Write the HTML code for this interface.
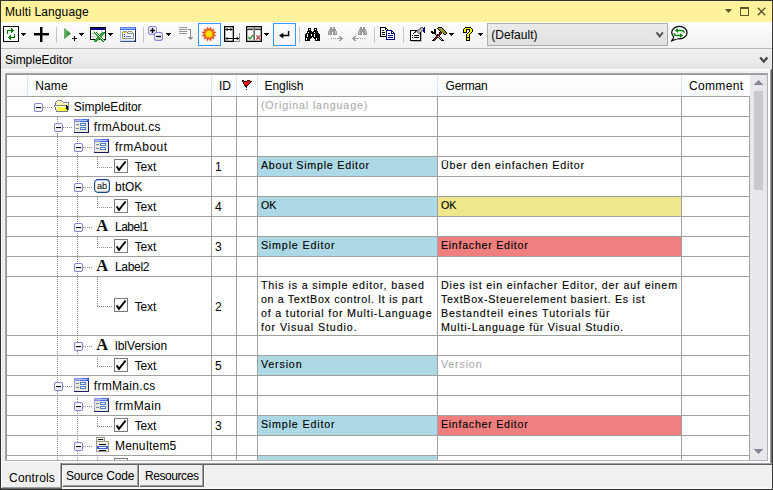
<!DOCTYPE html>
<html><head><meta charset="utf-8"><title>Multi Language</title>
<style>
html,body{margin:0;padding:0;}
body{width:773px;height:490px;position:relative;overflow:hidden;background:#f0f0f0;font-family:"Liberation Sans",sans-serif;}
body div,body span,body svg{position:absolute;display:block;}
span{white-space:nowrap;}
</style></head><body>
<div style="left:0px;top:0px;width:773px;height:490px;background:#f0f0f0;"></div>
<div style="left:0px;top:1px;width:773px;height:21px;background:#fff29d;"></div>
<span style="left:5.0px;top:5.84px;font-size:12px;line-height:12px;color:#000;letter-spacing:0.124px;">Multi Language</span>
<svg style="left:725px;top:9px" width="7" height="4" viewBox="0 0 7 4" ><path d="M0 0h7L3.5 4z" fill="#5f5427"/></svg>
<svg style="left:740px;top:7px" width="9" height="9" viewBox="0 0 9 9" ><path d="M0 0h9v9h-9zM1 2v6h7v-6z" fill="#5f5427" fill-rule="evenodd"/></svg>
<svg style="left:757px;top:7px" width="10" height="9" viewBox="0 0 10 9" ><path d="M0.800 0.800l7.400 7.400M8.200 0.800L0.800 8.200" stroke="#5f5427" stroke-width="1.500" fill="none"/></svg>
<div style="left:0px;top:22px;width:773px;height:26px;background:linear-gradient(#fdfdfd,#f1f1f1);"></div>
<div style="left:0px;top:48px;width:773px;height:1px;background:#b6b6b6;"></div>
<div style="left:0px;top:49px;width:773px;height:20px;background:linear-gradient(#f3f3f3,#e5e5e5);"></div>
<div style="left:0px;top:69px;width:773px;height:4px;background:#f0f0f0;"></div>
<span style="left:5.0px;top:53.84px;font-size:12px;line-height:12px;color:#000;letter-spacing:-0.019px;">SimpleEditor</span>
<svg style="left:759px;top:56px" width="10" height="9" viewBox="0 0 10 9" ><path d="M1.200 1.600l3.600 4L8.400 1.600" stroke="#484848" stroke-width="2.300" fill="none"/></svg>
<svg style="left:3px;top:26px" width="16" height="16" viewBox="0 0 16 16" shape-rendering="crispEdges"><rect x="0" y="0" width="16" height="1" fill="#000"/><rect x="0" y="1" width="1" height="1" fill="#000"/><rect x="1" y="1" width="14" height="1" fill="#fff"/><rect x="15" y="1" width="1" height="1" fill="#000"/><rect x="0" y="2" width="1" height="1" fill="#000"/><rect x="1" y="2" width="7" height="1" fill="#fff"/><rect x="8" y="2" width="1" height="1" fill="#008000"/><rect x="9" y="2" width="6" height="1" fill="#fff"/><rect x="15" y="2" width="1" height="1" fill="#000"/><rect x="0" y="3" width="1" height="1" fill="#000"/><rect x="1" y="3" width="7" height="1" fill="#fff"/><rect x="8" y="3" width="2" height="1" fill="#008000"/><rect x="10" y="3" width="5" height="1" fill="#fff"/><rect x="15" y="3" width="1" height="1" fill="#000"/><rect x="0" y="4" width="1" height="1" fill="#000"/><rect x="1" y="4" width="3" height="1" fill="#fff"/><rect x="4" y="4" width="7" height="1" fill="#008000"/><rect x="11" y="4" width="4" height="1" fill="#fff"/><rect x="15" y="4" width="1" height="1" fill="#000"/><rect x="0" y="5" width="1" height="1" fill="#000"/><rect x="1" y="5" width="3" height="1" fill="#fff"/><rect x="4" y="5" width="1" height="1" fill="#008000"/><rect x="5" y="5" width="3" height="1" fill="#fff"/><rect x="8" y="5" width="2" height="1" fill="#008000"/><rect x="10" y="5" width="5" height="1" fill="#fff"/><rect x="15" y="5" width="1" height="1" fill="#000"/><rect x="0" y="6" width="1" height="1" fill="#000"/><rect x="1" y="6" width="3" height="1" fill="#fff"/><rect x="4" y="6" width="1" height="1" fill="#008000"/><rect x="5" y="6" width="3" height="1" fill="#fff"/><rect x="8" y="6" width="1" height="1" fill="#008000"/><rect x="9" y="6" width="6" height="1" fill="#fff"/><rect x="15" y="6" width="1" height="1" fill="#000"/><rect x="0" y="7" width="1" height="1" fill="#000"/><rect x="1" y="7" width="3" height="1" fill="#fff"/><rect x="4" y="7" width="1" height="1" fill="#008000"/><rect x="5" y="7" width="10" height="1" fill="#fff"/><rect x="15" y="7" width="1" height="1" fill="#000"/><rect x="0" y="8" width="1" height="1" fill="#000"/><rect x="1" y="8" width="10" height="1" fill="#fff"/><rect x="11" y="8" width="1" height="1" fill="#008000"/><rect x="12" y="8" width="3" height="1" fill="#fff"/><rect x="15" y="8" width="1" height="1" fill="#000"/><rect x="0" y="9" width="1" height="1" fill="#000"/><rect x="1" y="9" width="6" height="1" fill="#fff"/><rect x="7" y="9" width="1" height="1" fill="#008000"/><rect x="8" y="9" width="3" height="1" fill="#fff"/><rect x="11" y="9" width="1" height="1" fill="#008000"/><rect x="12" y="9" width="3" height="1" fill="#fff"/><rect x="15" y="9" width="1" height="1" fill="#000"/><rect x="0" y="10" width="1" height="1" fill="#000"/><rect x="1" y="10" width="5" height="1" fill="#fff"/><rect x="6" y="10" width="2" height="1" fill="#008000"/><rect x="8" y="10" width="3" height="1" fill="#fff"/><rect x="11" y="10" width="1" height="1" fill="#008000"/><rect x="12" y="10" width="3" height="1" fill="#fff"/><rect x="15" y="10" width="1" height="1" fill="#000"/><rect x="0" y="11" width="1" height="1" fill="#000"/><rect x="1" y="11" width="4" height="1" fill="#fff"/><rect x="5" y="11" width="7" height="1" fill="#008000"/><rect x="12" y="11" width="3" height="1" fill="#fff"/><rect x="15" y="11" width="1" height="1" fill="#000"/><rect x="0" y="12" width="1" height="1" fill="#000"/><rect x="1" y="12" width="5" height="1" fill="#fff"/><rect x="6" y="12" width="2" height="1" fill="#008000"/><rect x="8" y="12" width="7" height="1" fill="#fff"/><rect x="15" y="12" width="1" height="1" fill="#000"/><rect x="0" y="13" width="1" height="1" fill="#000"/><rect x="1" y="13" width="6" height="1" fill="#fff"/><rect x="7" y="13" width="1" height="1" fill="#008000"/><rect x="8" y="13" width="7" height="1" fill="#fff"/><rect x="15" y="13" width="1" height="1" fill="#000"/><rect x="0" y="14" width="1" height="1" fill="#000"/><rect x="1" y="14" width="14" height="1" fill="#fff"/><rect x="15" y="14" width="1" height="1" fill="#000"/><rect x="0" y="15" width="16" height="1" fill="#000"/></svg>
<svg style="left:21px;top:33px" width="5" height="3" viewBox="0 0 5 3" shape-rendering="crispEdges"><rect x="0" y="0" width="5" height="1" fill="#000"/><rect x="1" y="1" width="3" height="1" fill="#000"/><rect x="2" y="2" width="1" height="1" fill="#000"/></svg>
<svg style="left:34px;top:27px" width="15" height="15" viewBox="0 0 15 15" ><path d="M0 6h15v2h-15zM6 0h2v15h-2z" fill="#000"/><path d="M0 8h6v0.800h-6zM8 8h7v0.800h-7zM8 0h0.800v6h-0.800zM8 8.800h0.800v6.200h-0.800z" fill="#666"/></svg>
<div style="left:56px;top:27px;width:1px;height:16px;background:#c4c4c4;"></div>
<svg style="left:64px;top:28px" width="8" height="11" viewBox="0 0 8 11" ><defs><linearGradient id="pg" x1="0" y1="0.200" x2="1" y2="0.600"><stop offset="0" stop-color="#7cc67c"/><stop offset="0.600" stop-color="#3f9a3f"/><stop offset="1" stop-color="#1c6c1c"/></linearGradient></defs><path d="M0.400 0.200v10.600l6-5.300z" fill="url(#pg)" stroke="#2a7a2a" stroke-width="0.500"/></svg>
<svg style="left:72px;top:36px" width="5" height="5" viewBox="0 0 5 5" shape-rendering="crispEdges"><rect x="2" y="0" width="1" height="1" fill="#000"/><rect x="2" y="1" width="1" height="1" fill="#000"/><rect x="0" y="2" width="5" height="1" fill="#000"/><rect x="2" y="3" width="1" height="1" fill="#000"/><rect x="2" y="4" width="1" height="1" fill="#000"/></svg>
<svg style="left:79px;top:33px" width="5" height="3" viewBox="0 0 5 3" shape-rendering="crispEdges"><rect x="0" y="0" width="5" height="1" fill="#000"/><rect x="1" y="1" width="3" height="1" fill="#000"/><rect x="2" y="2" width="1" height="1" fill="#000"/></svg>
<svg style="left:90px;top:27px" width="16" height="15" viewBox="0 0 16 15" shape-rendering="crispEdges"><rect x="0" y="0" width="16" height="1" fill="#000"/><rect x="0" y="1" width="1" height="1" fill="#000"/><rect x="1" y="1" width="14" height="1" fill="#0a0a8a"/><rect x="15" y="1" width="1" height="1" fill="#000"/><rect x="0" y="2" width="1" height="1" fill="#000"/><rect x="1" y="2" width="14" height="1" fill="#0a0a8a"/><rect x="15" y="2" width="1" height="1" fill="#000"/><rect x="0" y="3" width="1" height="1" fill="#000"/><rect x="1" y="3" width="2" height="1" fill="#fff"/><rect x="3" y="3" width="1" height="1" fill="#cfcfcf"/><rect x="4" y="3" width="3" height="1" fill="#fff"/><rect x="7" y="3" width="1" height="1" fill="#cfcfcf"/><rect x="8" y="3" width="3" height="1" fill="#fff"/><rect x="11" y="3" width="1" height="1" fill="#cfcfcf"/><rect x="12" y="3" width="3" height="1" fill="#fff"/><rect x="15" y="3" width="1" height="1" fill="#000"/><rect x="0" y="4" width="1" height="1" fill="#000"/><rect x="1" y="4" width="2" height="1" fill="#fff"/><rect x="3" y="4" width="1" height="1" fill="#cfcfcf"/><rect x="4" y="4" width="3" height="1" fill="#fff"/><rect x="7" y="4" width="1" height="1" fill="#cfcfcf"/><rect x="8" y="4" width="3" height="1" fill="#fff"/><rect x="11" y="4" width="1" height="1" fill="#cfcfcf"/><rect x="12" y="4" width="3" height="1" fill="#fff"/><rect x="15" y="4" width="1" height="1" fill="#000"/><rect x="0" y="5" width="1" height="1" fill="#000"/><rect x="1" y="5" width="2" height="1" fill="#fff"/><rect x="3" y="5" width="1" height="1" fill="#cfcfcf"/><rect x="4" y="5" width="1" height="1" fill="#078a07"/><rect x="5" y="5" width="1" height="1" fill="#fff"/><rect x="6" y="5" width="1" height="1" fill="#078a07"/><rect x="7" y="5" width="1" height="1" fill="#cfcfcf"/><rect x="8" y="5" width="3" height="1" fill="#fff"/><rect x="11" y="5" width="1" height="1" fill="#cfcfcf"/><rect x="12" y="5" width="1" height="1" fill="#078a07"/><rect x="13" y="5" width="1" height="1" fill="#5fb25f"/><rect x="14" y="5" width="1" height="1" fill="#078a07"/><rect x="15" y="5" width="1" height="1" fill="#000"/><rect x="0" y="6" width="1" height="1" fill="#000"/><rect x="1" y="6" width="3" height="1" fill="#cfcfcf"/><rect x="4" y="6" width="1" height="1" fill="#5fb25f"/><rect x="5" y="6" width="1" height="1" fill="#078a07"/><rect x="6" y="6" width="1" height="1" fill="#fff"/><rect x="7" y="6" width="1" height="1" fill="#078a07"/><rect x="8" y="6" width="3" height="1" fill="#cfcfcf"/><rect x="11" y="6" width="1" height="1" fill="#078a07"/><rect x="12" y="6" width="1" height="1" fill="#5fb25f"/><rect x="13" y="6" width="1" height="1" fill="#078a07"/><rect x="14" y="6" width="1" height="1" fill="#5fb25f"/><rect x="15" y="6" width="1" height="1" fill="#000"/><rect x="0" y="7" width="1" height="1" fill="#000"/><rect x="1" y="7" width="2" height="1" fill="#fff"/><rect x="3" y="7" width="1" height="1" fill="#cfcfcf"/><rect x="4" y="7" width="1" height="1" fill="#fff"/><rect x="5" y="7" width="1" height="1" fill="#5fb25f"/><rect x="6" y="7" width="1" height="1" fill="#078a07"/><rect x="7" y="7" width="1" height="1" fill="#fff"/><rect x="8" y="7" width="1" height="1" fill="#078a07"/><rect x="9" y="7" width="1" height="1" fill="#fff"/><rect x="10" y="7" width="1" height="1" fill="#078a07"/><rect x="11" y="7" width="1" height="1" fill="#5fb25f"/><rect x="12" y="7" width="1" height="1" fill="#078a07"/><rect x="13" y="7" width="1" height="1" fill="#5fb25f"/><rect x="14" y="7" width="1" height="1" fill="#fff"/><rect x="15" y="7" width="1" height="1" fill="#000"/><rect x="0" y="8" width="1" height="1" fill="#000"/><rect x="1" y="8" width="2" height="1" fill="#fff"/><rect x="3" y="8" width="1" height="1" fill="#cfcfcf"/><rect x="4" y="8" width="2" height="1" fill="#fff"/><rect x="6" y="8" width="1" height="1" fill="#5fb25f"/><rect x="7" y="8" width="1" height="1" fill="#078a07"/><rect x="8" y="8" width="1" height="1" fill="#fff"/><rect x="9" y="8" width="1" height="1" fill="#078a07"/><rect x="10" y="8" width="1" height="1" fill="#5fb25f"/><rect x="11" y="8" width="1" height="1" fill="#078a07"/><rect x="12" y="8" width="1" height="1" fill="#5fb25f"/><rect x="13" y="8" width="2" height="1" fill="#fff"/><rect x="15" y="8" width="1" height="1" fill="#000"/><rect x="0" y="9" width="1" height="1" fill="#000"/><rect x="1" y="9" width="6" height="1" fill="#cfcfcf"/><rect x="7" y="9" width="1" height="1" fill="#5fb25f"/><rect x="8" y="9" width="1" height="1" fill="#078a07"/><rect x="9" y="9" width="1" height="1" fill="#fff"/><rect x="10" y="9" width="1" height="1" fill="#078a07"/><rect x="11" y="9" width="1" height="1" fill="#5fb25f"/><rect x="12" y="9" width="3" height="1" fill="#cfcfcf"/><rect x="15" y="9" width="1" height="1" fill="#000"/><rect x="0" y="10" width="1" height="1" fill="#000"/><rect x="1" y="10" width="2" height="1" fill="#fff"/><rect x="3" y="10" width="1" height="1" fill="#cfcfcf"/><rect x="4" y="10" width="3" height="1" fill="#fff"/><rect x="7" y="10" width="1" height="1" fill="#078a07"/><rect x="8" y="10" width="1" height="1" fill="#5fb25f"/><rect x="9" y="10" width="1" height="1" fill="#078a07"/><rect x="10" y="10" width="1" height="1" fill="#fff"/><rect x="11" y="10" width="1" height="1" fill="#078a07"/><rect x="12" y="10" width="3" height="1" fill="#fff"/><rect x="15" y="10" width="1" height="1" fill="#000"/><rect x="0" y="11" width="1" height="1" fill="#000"/><rect x="1" y="11" width="2" height="1" fill="#fff"/><rect x="3" y="11" width="1" height="1" fill="#cfcfcf"/><rect x="4" y="11" width="2" height="1" fill="#fff"/><rect x="6" y="11" width="1" height="1" fill="#078a07"/><rect x="7" y="11" width="1" height="1" fill="#5fb25f"/><rect x="8" y="11" width="1" height="1" fill="#078a07"/><rect x="9" y="11" width="1" height="1" fill="#5fb25f"/><rect x="10" y="11" width="1" height="1" fill="#078a07"/><rect x="11" y="11" width="1" height="1" fill="#fff"/><rect x="12" y="11" width="1" height="1" fill="#078a07"/><rect x="13" y="11" width="2" height="1" fill="#fff"/><rect x="15" y="11" width="1" height="1" fill="#000"/><rect x="0" y="12" width="5" height="1" fill="#000"/><rect x="5" y="12" width="1" height="1" fill="#078a07"/><rect x="6" y="12" width="1" height="1" fill="#5fb25f"/><rect x="7" y="12" width="1" height="1" fill="#078a07"/><rect x="8" y="12" width="1" height="1" fill="#5fb25f"/><rect x="9" y="12" width="1" height="1" fill="#000"/><rect x="10" y="12" width="1" height="1" fill="#5fb25f"/><rect x="11" y="12" width="1" height="1" fill="#078a07"/><rect x="12" y="12" width="1" height="1" fill="#fff"/><rect x="13" y="12" width="1" height="1" fill="#078a07"/><rect x="14" y="12" width="2" height="1" fill="#000"/><rect x="4" y="13" width="1" height="1" fill="#078a07"/><rect x="5" y="13" width="1" height="1" fill="#5fb25f"/><rect x="6" y="13" width="1" height="1" fill="#078a07"/><rect x="7" y="13" width="1" height="1" fill="#5fb25f"/><rect x="11" y="13" width="1" height="1" fill="#5fb25f"/><rect x="12" y="13" width="1" height="1" fill="#078a07"/><rect x="13" y="13" width="1" height="1" fill="#fff"/><rect x="14" y="13" width="1" height="1" fill="#078a07"/><rect x="4" y="14" width="1" height="1" fill="#5fb25f"/><rect x="5" y="14" width="1" height="1" fill="#078a07"/><rect x="6" y="14" width="1" height="1" fill="#5fb25f"/><rect x="12" y="14" width="1" height="1" fill="#5fb25f"/><rect x="13" y="14" width="1" height="1" fill="#078a07"/><rect x="14" y="14" width="1" height="1" fill="#fff"/></svg>
<svg style="left:108px;top:33px" width="5" height="3" viewBox="0 0 5 3" shape-rendering="crispEdges"><rect x="0" y="0" width="5" height="1" fill="#000"/><rect x="1" y="1" width="3" height="1" fill="#000"/><rect x="2" y="2" width="1" height="1" fill="#000"/></svg>
<svg style="left:120px;top:27px" width="16" height="15" viewBox="0 0 16 15" shape-rendering="crispEdges"><rect x="0" y="0" width="15" height="1" fill="#5a86e6"/><rect x="15" y="0" width="1" height="1" fill="#3a62d0"/><rect x="0" y="1" width="1" height="1" fill="#5a86e6"/><rect x="1" y="1" width="14" height="1" fill="#8fb4f5"/><rect x="15" y="1" width="1" height="1" fill="#3a62d0"/><rect x="0" y="2" width="15" height="1" fill="#4272e2"/><rect x="15" y="2" width="1" height="1" fill="#3a62d0"/><rect x="0" y="3" width="1" height="1" fill="#a9c2f2"/><rect x="1" y="3" width="14" height="1" fill="#fdfdfd"/><rect x="15" y="3" width="1" height="1" fill="#1f2c5e"/><rect x="0" y="4" width="1" height="1" fill="#a9c2f2"/><rect x="1" y="4" width="2" height="1" fill="#fdfdfd"/><rect x="3" y="4" width="4" height="1" fill="#8f9694"/><rect x="7" y="4" width="1" height="1" fill="#fdfdfd"/><rect x="8" y="4" width="4" height="1" fill="#8f9694"/><rect x="12" y="4" width="3" height="1" fill="#fdfdfd"/><rect x="15" y="4" width="1" height="1" fill="#1f2c5e"/><rect x="0" y="5" width="1" height="1" fill="#a9c2f2"/><rect x="1" y="5" width="1" height="1" fill="#fdfdfd"/><rect x="2" y="5" width="1" height="1" fill="#8f9694"/><rect x="3" y="5" width="4" height="1" fill="#f8c63c"/><rect x="7" y="5" width="1" height="1" fill="#8f9694"/><rect x="8" y="5" width="4" height="1" fill="#fdfdfd"/><rect x="12" y="5" width="1" height="1" fill="#8f9694"/><rect x="13" y="5" width="2" height="1" fill="#fdfdfd"/><rect x="15" y="5" width="1" height="1" fill="#1f2c5e"/><rect x="0" y="6" width="1" height="1" fill="#a9c2f2"/><rect x="1" y="6" width="1" height="1" fill="#fdfdfd"/><rect x="2" y="6" width="1" height="1" fill="#8f9694"/><rect x="3" y="6" width="4" height="1" fill="#fdfdfd"/><rect x="7" y="6" width="7" height="1" fill="#8f9694"/><rect x="14" y="6" width="1" height="1" fill="#fdfdfd"/><rect x="15" y="6" width="1" height="1" fill="#1f2c5e"/><rect x="0" y="7" width="1" height="1" fill="#a9c2f2"/><rect x="1" y="7" width="1" height="1" fill="#fdfdfd"/><rect x="2" y="7" width="1" height="1" fill="#8f9694"/><rect x="3" y="7" width="1" height="1" fill="#fdfdfd"/><rect x="4" y="7" width="1" height="1" fill="#2222ee"/><rect x="5" y="7" width="8" height="1" fill="#fdfdfd"/><rect x="13" y="7" width="1" height="1" fill="#8f9694"/><rect x="14" y="7" width="1" height="1" fill="#fdfdfd"/><rect x="15" y="7" width="1" height="1" fill="#1f2c5e"/><rect x="0" y="8" width="1" height="1" fill="#a9c2f2"/><rect x="1" y="8" width="1" height="1" fill="#fdfdfd"/><rect x="2" y="8" width="1" height="1" fill="#8f9694"/><rect x="3" y="8" width="10" height="1" fill="#fdfdfd"/><rect x="13" y="8" width="1" height="1" fill="#8f9694"/><rect x="14" y="8" width="1" height="1" fill="#fdfdfd"/><rect x="15" y="8" width="1" height="1" fill="#1f2c5e"/><rect x="0" y="9" width="1" height="1" fill="#a9c2f2"/><rect x="1" y="9" width="1" height="1" fill="#fdfdfd"/><rect x="2" y="9" width="1" height="1" fill="#8f9694"/><rect x="3" y="9" width="1" height="1" fill="#fdfdfd"/><rect x="4" y="9" width="1" height="1" fill="#2222ee"/><rect x="5" y="9" width="1" height="1" fill="#fdfdfd"/><rect x="6" y="9" width="4" height="1" fill="#5a8aee"/><rect x="10" y="9" width="1" height="1" fill="#2a4ab0"/><rect x="11" y="9" width="2" height="1" fill="#fdfdfd"/><rect x="13" y="9" width="1" height="1" fill="#8f9694"/><rect x="14" y="9" width="1" height="1" fill="#fdfdfd"/><rect x="15" y="9" width="1" height="1" fill="#1f2c5e"/><rect x="0" y="10" width="1" height="1" fill="#a9c2f2"/><rect x="1" y="10" width="1" height="1" fill="#fdfdfd"/><rect x="2" y="10" width="1" height="1" fill="#8f9694"/><rect x="3" y="10" width="10" height="1" fill="#fdfdfd"/><rect x="13" y="10" width="1" height="1" fill="#8f9694"/><rect x="14" y="10" width="1" height="1" fill="#fdfdfd"/><rect x="15" y="10" width="1" height="1" fill="#1f2c5e"/><rect x="0" y="11" width="1" height="1" fill="#a9c2f2"/><rect x="1" y="11" width="1" height="1" fill="#fdfdfd"/><rect x="2" y="11" width="12" height="1" fill="#8f9694"/><rect x="14" y="11" width="1" height="1" fill="#fdfdfd"/><rect x="15" y="11" width="1" height="1" fill="#1f2c5e"/><rect x="0" y="12" width="1" height="1" fill="#a9c2f2"/><rect x="1" y="12" width="14" height="1" fill="#e4ecfa"/><rect x="15" y="12" width="1" height="1" fill="#1f2c5e"/><rect x="0" y="13" width="1" height="1" fill="#a9c2f2"/><rect x="1" y="13" width="13" height="1" fill="#c9d8f4"/><rect x="14" y="13" width="1" height="1" fill="#6f8ac8"/><rect x="15" y="13" width="1" height="1" fill="#1f2c5e"/><rect x="0" y="14" width="1" height="1" fill="#6f8ac8"/><rect x="1" y="14" width="13" height="1" fill="#3c4f8c"/><rect x="14" y="14" width="2" height="1" fill="#1f2c5e"/></svg>
<div style="left:143px;top:27px;width:1px;height:16px;background:#c4c4c4;"></div>
<svg style="left:148px;top:26px" width="15" height="15" viewBox="0 0 15 15" ><defs><linearGradient id="bg1" x1="0" y1="0" x2="0" y2="1"><stop offset="0.600" stop-color="#fff"/><stop offset="1" stop-color="#e2e2e8"/></linearGradient></defs><rect x="0.600" y="0.600" width="7.800" height="7.800" rx="1.600" fill="url(#bg1)" stroke="#8a87d9" stroke-width="1.100"/><path d="M2 4.500h5M4.500 2v5" stroke="#000" stroke-width="1.400"/><rect x="6.600" y="6.600" width="7.800" height="7.800" rx="1.600" fill="url(#bg1)" stroke="#8a87d9" stroke-width="1.100"/><path d="M8 10.500h5" stroke="#000" stroke-width="1.500"/></svg>
<svg style="left:166px;top:33px" width="5" height="3" viewBox="0 0 5 3" shape-rendering="crispEdges"><rect x="0" y="0" width="5" height="1" fill="#000"/><rect x="1" y="1" width="3" height="1" fill="#000"/><rect x="2" y="2" width="1" height="1" fill="#000"/></svg>
<svg style="left:179px;top:27px" width="14" height="13" viewBox="0 0 14 13" shape-rendering="crispEdges"><rect x="0" y="0" width="8" height="1" fill="#949494"/><rect x="0" y="2" width="8" height="1" fill="#949494"/><rect x="9" y="2" width="3" height="1" fill="#8e8e8e"/><rect x="11" y="3" width="1" height="1" fill="#8e8e8e"/><rect x="0" y="4" width="8" height="1" fill="#949494"/><rect x="11" y="4" width="1" height="1" fill="#8e8e8e"/><rect x="11" y="5" width="1" height="1" fill="#8e8e8e"/><rect x="0" y="6" width="8" height="1" fill="#949494"/><rect x="11" y="6" width="1" height="1" fill="#8e8e8e"/><rect x="11" y="7" width="1" height="1" fill="#8e8e8e"/><rect x="11" y="8" width="1" height="1" fill="#8e8e8e"/><rect x="11" y="9" width="1" height="1" fill="#8e8e8e"/><rect x="9" y="10" width="5" height="1" fill="#8e8e8e"/><rect x="10" y="11" width="3" height="1" fill="#8e8e8e"/><rect x="11" y="12" width="1" height="1" fill="#8e8e8e"/></svg>
<div style="left:198px;top:23px;width:23px;height:23px;background:rgba(255,255,255,0.350);border:1px solid #3399ff;box-sizing:border-box;"></div>
<svg style="left:201px;top:25.5px" width="16" height="16" viewBox="0 0 16 16" ><g transform="translate(8,8)"><circle r="8" fill="#fbe3c0" opacity="0.450"/><polygon points="7.34,1.97 4.24,2.45 5.37,5.37 2.45,4.24 1.97,7.34 0.00,4.90 -1.97,7.34 -2.45,4.24 -5.37,5.37 -4.24,2.45 -7.34,1.97 -4.90,0.00 -7.34,-1.97 -4.24,-2.45 -5.37,-5.37 -2.45,-4.24 -1.97,-7.34 -0.00,-4.90 1.97,-7.34 2.45,-4.24 5.37,-5.37 4.24,-2.45 7.34,-1.97 4.90,-0.00" fill="#e0401c"/><circle r="4.600" fill="#ee7a14"/><circle r="3.500" fill="#f4c80a"/><circle r="2.700" fill="#f6e406"/></g></svg>
<svg style="left:224px;top:26px" width="16" height="16" viewBox="0 0 16 16" ><rect x="0.650" y="0.650" width="8.700" height="14.700" fill="#fff" stroke="#000" stroke-width="1.300"/><path d="M1.500 3.500h7M1.500 12.500h13" stroke="#000" stroke-width="1.100"/><path d="M1.500 3.500l2-1.700v3.400zM8.500 3.500l-2-1.700v3.400zM1.500 12.500l2-1.700v3.400zM15 12.500l-2.200-1.700v3.400z" fill="#000"/><path d="M15.500 7v8.500h-5.500" stroke="#8c8c8c" fill="none"/></svg>
<svg style="left:246px;top:26px" width="16" height="16" viewBox="0 0 16 16" ><rect x="0.650" y="0.650" width="14.700" height="14.700" fill="#fff" stroke="#000" stroke-width="1.300"/><rect x="1.300" y="1.500" width="13.400" height="1.700" fill="#a8a8a8"/><rect x="1" y="3.200" width="14" height="0.900" fill="#000"/><rect x="7" y="1.300" width="1" height="13.400" fill="#9a9a9a"/><rect x="8" y="1.300" width="1" height="13.400" fill="#6a6a6a"/><path d="M2.300 11l1.700 2 3-4" stroke="#2a9a2a" stroke-width="1.300" fill="none"/><path d="M10.300 9.300l4 4.200M14.300 9.300l-4 4.200" stroke="#c03535" stroke-width="1.100"/></svg>
<svg style="left:264px;top:33px" width="5" height="3" viewBox="0 0 5 3" shape-rendering="crispEdges"><rect x="0" y="0" width="5" height="1" fill="#000"/><rect x="1" y="1" width="3" height="1" fill="#000"/><rect x="2" y="2" width="1" height="1" fill="#000"/></svg>
<div style="left:273px;top:23px;width:23px;height:23px;background:rgba(255,255,255,0.350);border:1px solid #3399ff;box-sizing:border-box;"></div>
<svg style="left:279px;top:30px" width="12" height="9" viewBox="0 0 12 9" ><path d="M9.600 1v4.600h-6" stroke="#000" stroke-width="1.500" fill="none"/><path d="M0 5.600l4.300-2.900v5.800z" fill="#000"/></svg>
<div style="left:299px;top:27px;width:1px;height:16px;background:#c4c4c4;"></div>
<svg style="left:305px;top:28px" width="15" height="13" viewBox="0 0 15 13" shape-rendering="crispEdges"><rect x="3" y="0" width="3" height="1" fill="#000"/><rect x="9" y="0" width="3" height="1" fill="#000"/><rect x="3" y="1" width="1" height="1" fill="#000"/><rect x="4" y="1" width="1" height="1" fill="#fff"/><rect x="5" y="1" width="1" height="1" fill="#000"/><rect x="9" y="1" width="1" height="1" fill="#000"/><rect x="10" y="1" width="1" height="1" fill="#fff"/><rect x="11" y="1" width="1" height="1" fill="#000"/><rect x="3" y="2" width="3" height="1" fill="#000"/><rect x="9" y="2" width="3" height="1" fill="#000"/><rect x="2" y="3" width="5" height="1" fill="#000"/><rect x="8" y="3" width="5" height="1" fill="#000"/><rect x="2" y="4" width="1" height="1" fill="#000"/><rect x="3" y="4" width="1" height="1" fill="#fff"/><rect x="4" y="4" width="5" height="1" fill="#000"/><rect x="9" y="4" width="1" height="1" fill="#fff"/><rect x="10" y="4" width="3" height="1" fill="#000"/><rect x="1" y="5" width="13" height="1" fill="#000"/><rect x="0" y="6" width="2" height="1" fill="#000"/><rect x="2" y="6" width="1" height="1" fill="#fff"/><rect x="3" y="6" width="3" height="1" fill="#000"/><rect x="6" y="6" width="1" height="1" fill="#fff"/><rect x="7" y="6" width="2" height="1" fill="#000"/><rect x="9" y="6" width="1" height="1" fill="#fff"/><rect x="10" y="6" width="5" height="1" fill="#000"/><rect x="0" y="7" width="2" height="1" fill="#000"/><rect x="2" y="7" width="1" height="1" fill="#fff"/><rect x="3" y="7" width="3" height="1" fill="#000"/><rect x="6" y="7" width="1" height="1" fill="#fff"/><rect x="7" y="7" width="2" height="1" fill="#000"/><rect x="9" y="7" width="1" height="1" fill="#fff"/><rect x="10" y="7" width="5" height="1" fill="#000"/><rect x="0" y="8" width="2" height="1" fill="#000"/><rect x="2" y="8" width="1" height="1" fill="#fff"/><rect x="3" y="8" width="6" height="1" fill="#000"/><rect x="9" y="8" width="1" height="1" fill="#fff"/><rect x="10" y="8" width="5" height="1" fill="#000"/><rect x="0" y="9" width="7" height="1" fill="#000"/><rect x="8" y="9" width="7" height="1" fill="#000"/><rect x="0" y="10" width="1" height="1" fill="#000"/><rect x="1" y="10" width="1" height="1" fill="#fff"/><rect x="2" y="10" width="4" height="1" fill="#000"/><rect x="9" y="10" width="2" height="1" fill="#000"/><rect x="11" y="10" width="1" height="1" fill="#fff"/><rect x="12" y="10" width="3" height="1" fill="#000"/><rect x="0" y="11" width="1" height="1" fill="#000"/><rect x="1" y="11" width="1" height="1" fill="#fff"/><rect x="2" y="11" width="3" height="1" fill="#000"/><rect x="10" y="11" width="1" height="1" fill="#000"/><rect x="11" y="11" width="1" height="1" fill="#fff"/><rect x="12" y="11" width="3" height="1" fill="#000"/><rect x="0" y="12" width="5" height="1" fill="#000"/><rect x="10" y="12" width="5" height="1" fill="#000"/></svg>
<svg style="left:328px;top:27px" width="9" height="8" viewBox="0 0 9 8" shape-rendering="crispEdges"><rect x="2" y="0" width="2" height="1" fill="#9a9a9a"/><rect x="5" y="0" width="2" height="1" fill="#9a9a9a"/><rect x="2" y="1" width="2" height="1" fill="#9a9a9a"/><rect x="5" y="1" width="2" height="1" fill="#9a9a9a"/><rect x="1" y="2" width="7" height="1" fill="#9a9a9a"/><rect x="1" y="3" width="7" height="1" fill="#9a9a9a"/><rect x="0" y="4" width="1" height="1" fill="#9a9a9a"/><rect x="1" y="4" width="1" height="1" fill="#c4c4c4"/><rect x="2" y="4" width="5" height="1" fill="#9a9a9a"/><rect x="7" y="4" width="1" height="1" fill="#c4c4c4"/><rect x="8" y="4" width="1" height="1" fill="#9a9a9a"/><rect x="0" y="5" width="1" height="1" fill="#9a9a9a"/><rect x="1" y="5" width="1" height="1" fill="#c4c4c4"/><rect x="2" y="5" width="2" height="1" fill="#9a9a9a"/><rect x="5" y="5" width="2" height="1" fill="#9a9a9a"/><rect x="7" y="5" width="1" height="1" fill="#c4c4c4"/><rect x="8" y="5" width="1" height="1" fill="#9a9a9a"/><rect x="0" y="6" width="1" height="1" fill="#9a9a9a"/><rect x="1" y="6" width="1" height="1" fill="#c4c4c4"/><rect x="2" y="6" width="2" height="1" fill="#9a9a9a"/><rect x="5" y="6" width="2" height="1" fill="#9a9a9a"/><rect x="7" y="6" width="1" height="1" fill="#c4c4c4"/><rect x="8" y="6" width="1" height="1" fill="#9a9a9a"/><rect x="0" y="7" width="4" height="1" fill="#9a9a9a"/><rect x="5" y="7" width="4" height="1" fill="#9a9a9a"/></svg>
<svg style="left:331px;top:36px" width="13" height="5" viewBox="0 0 13 5" shape-rendering="crispEdges"><rect x="8" y="0" width="2" height="1" fill="#9a9a9a"/><rect x="9" y="1" width="2" height="1" fill="#9a9a9a"/><rect x="0" y="2" width="1" height="1" fill="#9a9a9a"/><rect x="2" y="2" width="1" height="1" fill="#9a9a9a"/><rect x="4" y="2" width="1" height="1" fill="#9a9a9a"/><rect x="6" y="2" width="6" height="1" fill="#9a9a9a"/><rect x="9" y="3" width="2" height="1" fill="#9a9a9a"/><rect x="8" y="4" width="2" height="1" fill="#9a9a9a"/></svg>
<svg style="left:358px;top:27px" width="9" height="8" viewBox="0 0 9 8" shape-rendering="crispEdges"><rect x="2" y="0" width="2" height="1" fill="#9a9a9a"/><rect x="5" y="0" width="2" height="1" fill="#9a9a9a"/><rect x="2" y="1" width="2" height="1" fill="#9a9a9a"/><rect x="5" y="1" width="2" height="1" fill="#9a9a9a"/><rect x="1" y="2" width="7" height="1" fill="#9a9a9a"/><rect x="1" y="3" width="7" height="1" fill="#9a9a9a"/><rect x="0" y="4" width="1" height="1" fill="#9a9a9a"/><rect x="1" y="4" width="1" height="1" fill="#c4c4c4"/><rect x="2" y="4" width="5" height="1" fill="#9a9a9a"/><rect x="7" y="4" width="1" height="1" fill="#c4c4c4"/><rect x="8" y="4" width="1" height="1" fill="#9a9a9a"/><rect x="0" y="5" width="1" height="1" fill="#9a9a9a"/><rect x="1" y="5" width="1" height="1" fill="#c4c4c4"/><rect x="2" y="5" width="2" height="1" fill="#9a9a9a"/><rect x="5" y="5" width="2" height="1" fill="#9a9a9a"/><rect x="7" y="5" width="1" height="1" fill="#c4c4c4"/><rect x="8" y="5" width="1" height="1" fill="#9a9a9a"/><rect x="0" y="6" width="1" height="1" fill="#9a9a9a"/><rect x="1" y="6" width="1" height="1" fill="#c4c4c4"/><rect x="2" y="6" width="2" height="1" fill="#9a9a9a"/><rect x="5" y="6" width="2" height="1" fill="#9a9a9a"/><rect x="7" y="6" width="1" height="1" fill="#c4c4c4"/><rect x="8" y="6" width="1" height="1" fill="#9a9a9a"/><rect x="0" y="7" width="4" height="1" fill="#9a9a9a"/><rect x="5" y="7" width="4" height="1" fill="#9a9a9a"/></svg>
<svg style="left:352px;top:36px" width="13" height="5" viewBox="0 0 13 5" shape-rendering="crispEdges"><rect x="2" y="0" width="2" height="1" fill="#9a9a9a"/><rect x="1" y="1" width="2" height="1" fill="#9a9a9a"/><rect x="0" y="2" width="7" height="1" fill="#9a9a9a"/><rect x="8" y="2" width="1" height="1" fill="#9a9a9a"/><rect x="10" y="2" width="1" height="1" fill="#9a9a9a"/><rect x="12" y="2" width="1" height="1" fill="#9a9a9a"/><rect x="1" y="3" width="2" height="1" fill="#9a9a9a"/><rect x="2" y="4" width="2" height="1" fill="#9a9a9a"/></svg>
<div style="left:374px;top:27px;width:1px;height:16px;background:#c4c4c4;"></div>
<svg style="left:380px;top:27px" width="15" height="13" viewBox="0 0 15 13" shape-rendering="crispEdges"><rect x="0" y="0" width="6" height="1" fill="#000"/><rect x="0" y="1" width="1" height="1" fill="#000"/><rect x="1" y="1" width="4" height="1" fill="#fff"/><rect x="5" y="1" width="2" height="1" fill="#000"/><rect x="0" y="2" width="1" height="1" fill="#000"/><rect x="1" y="2" width="4" height="1" fill="#fff"/><rect x="5" y="2" width="1" height="1" fill="#000"/><rect x="6" y="2" width="1" height="1" fill="#fff"/><rect x="7" y="2" width="1" height="1" fill="#000"/><rect x="0" y="3" width="1" height="1" fill="#000"/><rect x="1" y="3" width="1" height="1" fill="#fff"/><rect x="2" y="3" width="2" height="1" fill="#000"/><rect x="4" y="3" width="2" height="1" fill="#fff"/><rect x="6" y="3" width="6" height="1" fill="#00008b"/><rect x="0" y="4" width="1" height="1" fill="#000"/><rect x="1" y="4" width="5" height="1" fill="#fff"/><rect x="6" y="4" width="1" height="1" fill="#00008b"/><rect x="7" y="4" width="4" height="1" fill="#fff"/><rect x="11" y="4" width="2" height="1" fill="#00008b"/><rect x="0" y="5" width="1" height="1" fill="#000"/><rect x="1" y="5" width="1" height="1" fill="#fff"/><rect x="2" y="5" width="3" height="1" fill="#000"/><rect x="5" y="5" width="1" height="1" fill="#fff"/><rect x="6" y="5" width="1" height="1" fill="#00008b"/><rect x="7" y="5" width="4" height="1" fill="#fff"/><rect x="11" y="5" width="1" height="1" fill="#00008b"/><rect x="12" y="5" width="1" height="1" fill="#fff"/><rect x="13" y="5" width="1" height="1" fill="#00008b"/><rect x="0" y="6" width="1" height="1" fill="#000"/><rect x="1" y="6" width="5" height="1" fill="#fff"/><rect x="6" y="6" width="1" height="1" fill="#00008b"/><rect x="7" y="6" width="1" height="1" fill="#fff"/><rect x="8" y="6" width="2" height="1" fill="#00008b"/><rect x="10" y="6" width="1" height="1" fill="#fff"/><rect x="11" y="6" width="4" height="1" fill="#00008b"/><rect x="0" y="7" width="1" height="1" fill="#000"/><rect x="1" y="7" width="1" height="1" fill="#fff"/><rect x="2" y="7" width="3" height="1" fill="#000"/><rect x="5" y="7" width="1" height="1" fill="#fff"/><rect x="6" y="7" width="1" height="1" fill="#00008b"/><rect x="7" y="7" width="7" height="1" fill="#fff"/><rect x="14" y="7" width="1" height="1" fill="#00008b"/><rect x="0" y="8" width="1" height="1" fill="#000"/><rect x="1" y="8" width="5" height="1" fill="#fff"/><rect x="6" y="8" width="1" height="1" fill="#00008b"/><rect x="7" y="8" width="1" height="1" fill="#fff"/><rect x="8" y="8" width="5" height="1" fill="#00008b"/><rect x="13" y="8" width="1" height="1" fill="#fff"/><rect x="14" y="8" width="1" height="1" fill="#00008b"/><rect x="0" y="9" width="6" height="1" fill="#000"/><rect x="6" y="9" width="1" height="1" fill="#00008b"/><rect x="7" y="9" width="7" height="1" fill="#fff"/><rect x="14" y="9" width="1" height="1" fill="#00008b"/><rect x="6" y="10" width="1" height="1" fill="#00008b"/><rect x="7" y="10" width="1" height="1" fill="#fff"/><rect x="8" y="10" width="5" height="1" fill="#00008b"/><rect x="13" y="10" width="1" height="1" fill="#fff"/><rect x="14" y="10" width="1" height="1" fill="#00008b"/><rect x="6" y="11" width="1" height="1" fill="#00008b"/><rect x="7" y="11" width="7" height="1" fill="#fff"/><rect x="14" y="11" width="1" height="1" fill="#00008b"/><rect x="6" y="12" width="9" height="1" fill="#00008b"/></svg>
<div style="left:403px;top:27px;width:1px;height:16px;background:#c4c4c4;"></div>
<svg style="left:410px;top:27px" width="15" height="15" viewBox="0 0 15 15" shape-rendering="crispEdges"><rect x="10" y="0" width="1" height="1" fill="#b4b4b4"/><rect x="11" y="0" width="2" height="1" fill="#6e6e6e"/><rect x="14" y="0" width="1" height="1" fill="#000090"/><rect x="9" y="1" width="1" height="1" fill="#b4b4b4"/><rect x="10" y="1" width="1" height="1" fill="#6e6e6e"/><rect x="11" y="1" width="2" height="1" fill="#b4b4b4"/><rect x="13" y="1" width="2" height="1" fill="#000090"/><rect x="8" y="2" width="1" height="1" fill="#b4b4b4"/><rect x="9" y="2" width="1" height="1" fill="#6e6e6e"/><rect x="10" y="2" width="3" height="1" fill="#b4b4b4"/><rect x="13" y="2" width="2" height="1" fill="#000090"/><rect x="0" y="3" width="7" height="1" fill="#000"/><rect x="7" y="3" width="2" height="1" fill="#6e6e6e"/><rect x="9" y="3" width="3" height="1" fill="#b4b4b4"/><rect x="12" y="3" width="1" height="1" fill="#6e6e6e"/><rect x="13" y="3" width="2" height="1" fill="#000090"/><rect x="0" y="4" width="1" height="1" fill="#000"/><rect x="1" y="4" width="4" height="1" fill="#fff"/><rect x="5" y="4" width="1" height="1" fill="#000"/><rect x="6" y="4" width="2" height="1" fill="#6e6e6e"/><rect x="8" y="4" width="3" height="1" fill="#b4b4b4"/><rect x="11" y="4" width="1" height="1" fill="#6e6e6e"/><rect x="13" y="4" width="2" height="1" fill="#000090"/><rect x="0" y="5" width="1" height="1" fill="#000"/><rect x="1" y="5" width="3" height="1" fill="#fff"/><rect x="4" y="5" width="1" height="1" fill="#000"/><rect x="5" y="5" width="1" height="1" fill="#6e6e6e"/><rect x="6" y="5" width="1" height="1" fill="#fff"/><rect x="7" y="5" width="1" height="1" fill="#6e6e6e"/><rect x="8" y="5" width="2" height="1" fill="#b4b4b4"/><rect x="10" y="5" width="1" height="1" fill="#000"/><rect x="11" y="5" width="1" height="1" fill="#b8b8b8"/><rect x="14" y="5" width="1" height="1" fill="#000090"/><rect x="0" y="6" width="1" height="1" fill="#000"/><rect x="1" y="6" width="2" height="1" fill="#fff"/><rect x="3" y="6" width="1" height="1" fill="#000"/><rect x="4" y="6" width="4" height="1" fill="#fff"/><rect x="8" y="6" width="2" height="1" fill="#6e6e6e"/><rect x="10" y="6" width="1" height="1" fill="#000"/><rect x="11" y="6" width="1" height="1" fill="#b8b8b8"/><rect x="0" y="7" width="1" height="1" fill="#000"/><rect x="1" y="7" width="9" height="1" fill="#fff"/><rect x="10" y="7" width="1" height="1" fill="#000"/><rect x="11" y="7" width="1" height="1" fill="#b8b8b8"/><rect x="0" y="8" width="1" height="1" fill="#000"/><rect x="1" y="8" width="1" height="1" fill="#fff"/><rect x="2" y="8" width="1" height="1" fill="#000"/><rect x="3" y="8" width="1" height="1" fill="#fff"/><rect x="4" y="8" width="5" height="1" fill="#000"/><rect x="9" y="8" width="1" height="1" fill="#fff"/><rect x="10" y="8" width="1" height="1" fill="#000"/><rect x="11" y="8" width="1" height="1" fill="#b8b8b8"/><rect x="0" y="9" width="1" height="1" fill="#000"/><rect x="1" y="9" width="9" height="1" fill="#fff"/><rect x="10" y="9" width="1" height="1" fill="#000"/><rect x="11" y="9" width="1" height="1" fill="#b8b8b8"/><rect x="0" y="10" width="1" height="1" fill="#000"/><rect x="1" y="10" width="1" height="1" fill="#fff"/><rect x="2" y="10" width="1" height="1" fill="#000"/><rect x="3" y="10" width="1" height="1" fill="#fff"/><rect x="4" y="10" width="5" height="1" fill="#000"/><rect x="9" y="10" width="1" height="1" fill="#fff"/><rect x="10" y="10" width="1" height="1" fill="#000"/><rect x="11" y="10" width="1" height="1" fill="#b8b8b8"/><rect x="0" y="11" width="1" height="1" fill="#000"/><rect x="1" y="11" width="9" height="1" fill="#fff"/><rect x="10" y="11" width="1" height="1" fill="#000"/><rect x="11" y="11" width="1" height="1" fill="#b8b8b8"/><rect x="0" y="12" width="1" height="1" fill="#000"/><rect x="1" y="12" width="9" height="1" fill="#fff"/><rect x="10" y="12" width="1" height="1" fill="#000"/><rect x="11" y="12" width="1" height="1" fill="#b8b8b8"/><rect x="0" y="13" width="11" height="1" fill="#000"/><rect x="11" y="13" width="1" height="1" fill="#b8b8b8"/><rect x="1" y="14" width="11" height="1" fill="#b8b8b8"/></svg>
<svg style="left:431px;top:27px" width="16" height="14" viewBox="0 0 16 14" shape-rendering="crispEdges"><rect x="7" y="0" width="4" height="1" fill="#000"/><rect x="6" y="1" width="1" height="1" fill="#000"/><rect x="7" y="1" width="1" height="1" fill="#8f8a10"/><rect x="8" y="1" width="1" height="1" fill="#c8c03a"/><rect x="9" y="1" width="2" height="1" fill="#8f8a10"/><rect x="11" y="1" width="1" height="1" fill="#000"/><rect x="3" y="2" width="2" height="1" fill="#000"/><rect x="7" y="2" width="1" height="1" fill="#000"/><rect x="8" y="2" width="2" height="1" fill="#8f8a10"/><rect x="10" y="2" width="1" height="1" fill="#c8c03a"/><rect x="11" y="2" width="1" height="1" fill="#8f8a10"/><rect x="12" y="2" width="1" height="1" fill="#000"/><rect x="3" y="3" width="2" height="1" fill="#000"/><rect x="8" y="3" width="1" height="1" fill="#000"/><rect x="9" y="3" width="3" height="1" fill="#8f8a10"/><rect x="12" y="3" width="1" height="1" fill="#c8c03a"/><rect x="13" y="3" width="1" height="1" fill="#000"/><rect x="0" y="4" width="2" height="1" fill="#000"/><rect x="3" y="4" width="2" height="1" fill="#000"/><rect x="9" y="4" width="1" height="1" fill="#000"/><rect x="10" y="4" width="4" height="1" fill="#8f8a10"/><rect x="14" y="4" width="1" height="1" fill="#000"/><rect x="0" y="5" width="5" height="1" fill="#000"/><rect x="8" y="5" width="1" height="1" fill="#000"/><rect x="9" y="5" width="1" height="1" fill="#b01818"/><rect x="10" y="5" width="1" height="1" fill="#000"/><rect x="11" y="5" width="4" height="1" fill="#8f8a10"/><rect x="15" y="5" width="1" height="1" fill="#000"/><rect x="1" y="6" width="4" height="1" fill="#000"/><rect x="8" y="6" width="1" height="1" fill="#000"/><rect x="9" y="6" width="1" height="1" fill="#b01818"/><rect x="10" y="6" width="1" height="1" fill="#000"/><rect x="12" y="6" width="1" height="1" fill="#000"/><rect x="13" y="6" width="2" height="1" fill="#8f8a10"/><rect x="15" y="6" width="1" height="1" fill="#000"/><rect x="4" y="7" width="1" height="1" fill="#000"/><rect x="5" y="7" width="1" height="1" fill="#d8d8d8"/><rect x="6" y="7" width="2" height="1" fill="#000"/><rect x="8" y="7" width="1" height="1" fill="#b01818"/><rect x="9" y="7" width="1" height="1" fill="#000"/><rect x="13" y="7" width="2" height="1" fill="#000"/><rect x="5" y="8" width="2" height="1" fill="#000"/><rect x="7" y="8" width="1" height="1" fill="#b01818"/><rect x="8" y="8" width="1" height="1" fill="#000"/><rect x="5" y="9" width="1" height="1" fill="#000"/><rect x="6" y="9" width="1" height="1" fill="#b01818"/><rect x="7" y="9" width="1" height="1" fill="#d8d8d8"/><rect x="8" y="9" width="1" height="1" fill="#000"/><rect x="4" y="10" width="1" height="1" fill="#000"/><rect x="5" y="10" width="1" height="1" fill="#b01818"/><rect x="6" y="10" width="2" height="1" fill="#000"/><rect x="8" y="10" width="1" height="1" fill="#d8d8d8"/><rect x="9" y="10" width="1" height="1" fill="#000"/><rect x="3" y="11" width="1" height="1" fill="#000"/><rect x="4" y="11" width="1" height="1" fill="#b01818"/><rect x="5" y="11" width="1" height="1" fill="#000"/><rect x="8" y="11" width="1" height="1" fill="#000"/><rect x="9" y="11" width="1" height="1" fill="#d8d8d8"/><rect x="10" y="11" width="1" height="1" fill="#000"/><rect x="2" y="12" width="1" height="1" fill="#000"/><rect x="3" y="12" width="1" height="1" fill="#b01818"/><rect x="4" y="12" width="1" height="1" fill="#000"/><rect x="9" y="12" width="1" height="1" fill="#000"/><rect x="10" y="12" width="1" height="1" fill="#d8d8d8"/><rect x="11" y="12" width="1" height="1" fill="#000"/><rect x="1" y="13" width="3" height="1" fill="#000"/><rect x="10" y="13" width="3" height="1" fill="#000"/></svg>
<svg style="left:449px;top:33px" width="5" height="3" viewBox="0 0 5 3" shape-rendering="crispEdges"><rect x="0" y="0" width="5" height="1" fill="#000"/><rect x="1" y="1" width="3" height="1" fill="#000"/><rect x="2" y="2" width="1" height="1" fill="#000"/></svg>
<svg style="left:463px;top:27px" width="10" height="14" viewBox="0 0 10 14" shape-rendering="crispEdges"><rect x="2" y="0" width="6" height="1" fill="#000"/><rect x="1" y="1" width="1" height="1" fill="#000"/><rect x="2" y="1" width="6" height="1" fill="#ffff00"/><rect x="8" y="1" width="1" height="1" fill="#000"/><rect x="0" y="2" width="1" height="1" fill="#000"/><rect x="1" y="2" width="2" height="1" fill="#ffff00"/><rect x="3" y="2" width="4" height="1" fill="#000"/><rect x="7" y="2" width="2" height="1" fill="#ffff00"/><rect x="9" y="2" width="1" height="1" fill="#000"/><rect x="0" y="3" width="1" height="1" fill="#000"/><rect x="1" y="3" width="2" height="1" fill="#ffff00"/><rect x="3" y="3" width="1" height="1" fill="#000"/><rect x="6" y="3" width="1" height="1" fill="#000"/><rect x="7" y="3" width="2" height="1" fill="#ffff00"/><rect x="9" y="3" width="1" height="1" fill="#000"/><rect x="0" y="4" width="1" height="1" fill="#000"/><rect x="1" y="4" width="2" height="1" fill="#ffff00"/><rect x="3" y="4" width="1" height="1" fill="#000"/><rect x="6" y="4" width="1" height="1" fill="#000"/><rect x="7" y="4" width="2" height="1" fill="#ffff00"/><rect x="9" y="4" width="1" height="1" fill="#000"/><rect x="0" y="5" width="4" height="1" fill="#000"/><rect x="5" y="5" width="1" height="1" fill="#000"/><rect x="6" y="5" width="2" height="1" fill="#ffff00"/><rect x="8" y="5" width="1" height="1" fill="#000"/><rect x="4" y="6" width="1" height="1" fill="#000"/><rect x="5" y="6" width="2" height="1" fill="#ffff00"/><rect x="7" y="6" width="1" height="1" fill="#000"/><rect x="3" y="7" width="1" height="1" fill="#000"/><rect x="4" y="7" width="2" height="1" fill="#ffff00"/><rect x="6" y="7" width="1" height="1" fill="#000"/><rect x="3" y="8" width="1" height="1" fill="#000"/><rect x="4" y="8" width="2" height="1" fill="#ffff00"/><rect x="6" y="8" width="1" height="1" fill="#000"/><rect x="3" y="9" width="1" height="1" fill="#000"/><rect x="4" y="9" width="2" height="1" fill="#ffff00"/><rect x="6" y="9" width="1" height="1" fill="#000"/><rect x="3" y="10" width="4" height="1" fill="#000"/><rect x="3" y="11" width="1" height="1" fill="#000"/><rect x="4" y="11" width="2" height="1" fill="#ffff00"/><rect x="6" y="11" width="1" height="1" fill="#000"/><rect x="3" y="12" width="1" height="1" fill="#000"/><rect x="4" y="12" width="2" height="1" fill="#ffff00"/><rect x="6" y="12" width="1" height="1" fill="#000"/><rect x="3" y="13" width="4" height="1" fill="#000"/></svg>
<svg style="left:478px;top:33px" width="5" height="3" viewBox="0 0 5 3" shape-rendering="crispEdges"><rect x="0" y="0" width="5" height="1" fill="#000"/><rect x="1" y="1" width="3" height="1" fill="#000"/><rect x="2" y="2" width="1" height="1" fill="#000"/></svg>
<div style="left:487px;top:23px;width:181px;height:23px;background:linear-gradient(#ebebeb,#e1e1e1);border:1px solid #adadad;box-sizing:border-box;"></div>
<span style="left:491.3px;top:28.84px;font-size:12px;line-height:12px;color:#000;letter-spacing:0.021px;">(Default)</span>
<svg style="left:655px;top:31px" width="10" height="8" viewBox="0 0 10 8" ><path d="M1.500 1.400l3.200 3.900L7.900 1.400" stroke="#555" stroke-width="2.100" fill="none"/></svg>
<svg style="left:670px;top:25px" width="19" height="18" viewBox="0 0 19 18" ><ellipse cx="9.400" cy="7.600" rx="7.700" ry="6.200" fill="#fff" stroke="#000" stroke-width="1.200"/><path d="M4.300 11.800l-2.900 4.300 6-2.400" fill="#fff" stroke="#000" stroke-width="1.100" stroke-linejoin="round"/><path d="M4.400 11.500l3 2.100" stroke="#fff" stroke-width="1.600"/><path d="M7.500 5.500h4q2.500 0 2.700 2.400" stroke="#0a8a0a" stroke-width="1.300" fill="none"/><path d="M8 3.300l-3.300 2.200 3.300 2.200z" fill="#0a8a0a"/><path d="M10.500 10.500h-4q-2.500 0-2.700-2.400" stroke="#0a8a0a" stroke-width="1.300" fill="none"/><path d="M10 8.300l3.300 2.200-3.300 2.200z" fill="#0a8a0a"/></svg>
<div style="left:1px;top:69px;width:771px;height:1px;background:#fff;"></div>
<div style="left:1px;top:70px;width:771px;height:1px;background:#f6f6f6;"></div>
<div style="left:1px;top:69px;width:1px;height:396px;background:#fff;"></div>
<div style="left:2px;top:70px;width:1px;height:394px;background:#e6e6e6;"></div>
<div style="left:770px;top:70px;width:1px;height:395px;background:#a0a0a0;"></div>
<div style="left:771px;top:69px;width:1px;height:396px;background:#696969;"></div>
<div style="left:5px;top:73px;width:764px;height:389px;background:#fff;"></div>
<div style="left:5px;top:73px;width:763px;height:1px;background:#a4a4a4;"></div>
<div style="left:5px;top:73px;width:1px;height:388px;background:#a4a4a8;"></div>
<div style="left:6px;top:74px;width:762px;height:1px;background:#969696;"></div>
<div style="left:6px;top:74px;width:1px;height:387px;background:#989898;"></div>
<div style="left:767px;top:74px;width:1px;height:387px;background:#b2b2b6;"></div>
<div style="left:6px;top:460px;width:762px;height:1px;background:#b2b2b6;"></div>
<div style="left:769px;top:73px;width:1px;height:390px;background:#f5f5f5;"></div>
<div style="left:7px;top:75px;width:743px;height:21px;background:linear-gradient(#ffffff,#f9fafc);"></div>
<div style="left:27px;top:75px;width:1px;height:21px;background:#dbe6f4;"></div>
<div style="left:211px;top:75px;width:1px;height:21px;background:#dbe6f4;"></div>
<div style="left:236px;top:75px;width:1px;height:21px;background:#dbe6f4;"></div>
<div style="left:257px;top:75px;width:1px;height:21px;background:#dbe6f4;"></div>
<div style="left:437px;top:75px;width:1px;height:21px;background:#dbe6f4;"></div>
<div style="left:681px;top:75px;width:1px;height:21px;background:#dbe6f4;"></div>
<div style="left:7px;top:96px;width:743px;height:1px;background:#a0a0a0;"></div>
<span style="left:35.2px;top:79.84px;font-size:12px;line-height:12px;color:#000;letter-spacing:0.173px;">Name</span>
<span style="left:219.1px;top:79.84px;font-size:12px;line-height:12px;color:#000;letter-spacing:-0.300px;">ID</span>
<span style="left:264.6px;top:79.84px;font-size:12px;line-height:12px;color:#000;letter-spacing:-0.094px;">English</span>
<span style="left:445.6px;top:79.84px;font-size:12px;line-height:12px;color:#000;letter-spacing:-0.258px;">German</span>
<span style="left:689.0px;top:79.84px;font-size:12px;line-height:12px;color:#000;letter-spacing:0.327px;">Comment</span>
<svg style="left:242px;top:80px" width="10" height="10" viewBox="0 0 10 10" shape-rendering="crispEdges"><rect x="0" y="0" width="2" height="1" fill="#1a0000"/><rect x="5" y="0" width="3" height="1" fill="#1a0000"/><rect x="0" y="1" width="1" height="1" fill="#1a0000"/><rect x="1" y="1" width="1" height="1" fill="#f01010"/><rect x="2" y="1" width="3" height="1" fill="#1a0000"/><rect x="5" y="1" width="3" height="1" fill="#f01010"/><rect x="8" y="1" width="2" height="1" fill="#1a0000"/><rect x="1" y="2" width="1" height="1" fill="#1a0000"/><rect x="2" y="2" width="6" height="1" fill="#f01010"/><rect x="8" y="2" width="1" height="1" fill="#1a0000"/><rect x="1" y="3" width="1" height="1" fill="#1a0000"/><rect x="2" y="3" width="5" height="1" fill="#f01010"/><rect x="7" y="3" width="1" height="1" fill="#1a0000"/><rect x="2" y="4" width="1" height="1" fill="#1a0000"/><rect x="3" y="4" width="3" height="1" fill="#f01010"/><rect x="6" y="4" width="1" height="1" fill="#1a0000"/><rect x="2" y="5" width="2" height="1" fill="#1a0000"/><rect x="4" y="5" width="1" height="1" fill="#f01010"/><rect x="5" y="5" width="1" height="1" fill="#1a0000"/><rect x="3" y="6" width="2" height="1" fill="#1a0000"/><rect x="4" y="7" width="1" height="1" fill="#1a0000"/><rect x="4" y="9" width="1" height="1" fill="#1a0000"/></svg>
<div style="left:7px;top:116px;width:743px;height:1px;background:#a0a0a0;"></div>
<div style="left:7px;top:136px;width:743px;height:1px;background:#a0a0a0;"></div>
<div style="left:7px;top:156px;width:743px;height:1px;background:#a0a0a0;"></div>
<div style="left:7px;top:176px;width:743px;height:1px;background:#a0a0a0;"></div>
<div style="left:7px;top:196px;width:743px;height:1px;background:#a0a0a0;"></div>
<div style="left:7px;top:216px;width:743px;height:1px;background:#a0a0a0;"></div>
<div style="left:7px;top:236px;width:743px;height:1px;background:#a0a0a0;"></div>
<div style="left:7px;top:256px;width:743px;height:1px;background:#a0a0a0;"></div>
<div style="left:7px;top:276px;width:743px;height:1px;background:#a0a0a0;"></div>
<div style="left:7px;top:335px;width:743px;height:1px;background:#a0a0a0;"></div>
<div style="left:7px;top:355px;width:743px;height:1px;background:#a0a0a0;"></div>
<div style="left:7px;top:375px;width:743px;height:1px;background:#a0a0a0;"></div>
<div style="left:7px;top:395px;width:743px;height:1px;background:#a0a0a0;"></div>
<div style="left:7px;top:415px;width:743px;height:1px;background:#a0a0a0;"></div>
<div style="left:7px;top:435px;width:743px;height:1px;background:#a0a0a0;"></div>
<div style="left:7px;top:455px;width:743px;height:1px;background:#a0a0a0;"></div>
<div style="left:211px;top:97px;width:1px;height:363px;background:#a0a0a0;"></div>
<div style="left:236px;top:97px;width:1px;height:363px;background:#a0a0a0;"></div>
<div style="left:257px;top:97px;width:1px;height:363px;background:#a0a0a0;"></div>
<div style="left:437px;top:97px;width:1px;height:363px;background:#a0a0a0;"></div>
<div style="left:681px;top:97px;width:1px;height:363px;background:#a0a0a0;"></div>
<div style="left:749px;top:97px;width:1px;height:363px;background:#a0a0a0;"></div>
<div style="left:750px;top:75px;width:17px;height:385px;background:#e8e8ec;"></div>
<div style="left:754px;top:91px;width:9px;height:99px;background:#c8c9cf;"></div>
<svg style="left:754px;top:80px" width="9" height="5" viewBox="0 0 9 5" shape-rendering="crispEdges"><rect x="4" y="0" width="1" height="1" fill="#868999"/><rect x="3" y="1" width="3" height="1" fill="#868999"/><rect x="2" y="2" width="5" height="1" fill="#868999"/><rect x="1" y="3" width="7" height="1" fill="#868999"/><rect x="0" y="4" width="9" height="1" fill="#868999"/></svg>
<svg style="left:754px;top:449px" width="9" height="5" viewBox="0 0 9 5" shape-rendering="crispEdges"><rect x="0" y="0" width="9" height="1" fill="#868999"/><rect x="1" y="1" width="7" height="1" fill="#868999"/><rect x="2" y="2" width="5" height="1" fill="#868999"/><rect x="3" y="3" width="3" height="1" fill="#868999"/><rect x="4" y="4" width="1" height="1" fill="#868999"/></svg>
<div style="left:258px;top:157px;width:179px;height:19px;background:#add8e6;"></div>
<div style="left:258px;top:197px;width:179px;height:19px;background:#add8e6;"></div>
<div style="left:258px;top:237px;width:179px;height:19px;background:#add8e6;"></div>
<div style="left:258px;top:356px;width:179px;height:19px;background:#add8e6;"></div>
<div style="left:258px;top:416px;width:179px;height:19px;background:#add8e6;"></div>
<div style="left:258px;top:456px;width:179px;height:4px;background:#add8e6;"></div>
<div style="left:438px;top:197px;width:243px;height:19px;background:#f0e68c;"></div>
<div style="left:438px;top:237px;width:243px;height:19px;background:#f08080;"></div>
<div style="left:438px;top:416px;width:243px;height:19px;background:#f08080;"></div>
<div style="left:57px;top:117px;width:1px;height:343px;background:repeating-linear-gradient(180deg,#8c8c8c 0 1px,transparent 1px 2px)"></div>
<div style="left:77px;top:137px;width:1px;height:218px;background:repeating-linear-gradient(180deg,#8c8c8c 0 1px,transparent 1px 2px)"></div>
<div style="left:77px;top:397px;width:1px;height:63px;background:repeating-linear-gradient(180deg,#8c8c8c 0 1px,transparent 1px 2px)"></div>
<div style="left:43px;top:107px;width:9px;height:1px;background:repeating-linear-gradient(90deg,#8c8c8c 0 1px,transparent 1px 2px)"></div>
<svg style="left:34px;top:103px" width="9" height="9" viewBox="0 0 9 9" ><rect x="0.550" y="0.550" width="7.900" height="7.900" rx="1.500" fill="#fff" stroke="#8482d6" stroke-width="1.100"/><rect x="1.500" y="5.200" width="6" height="0.800" fill="#dcdcdc"/><rect x="1.300" y="6.300" width="6.400" height="1.200" fill="#ececec"/><rect x="2" y="4" width="5" height="1" fill="#000"/></svg>
<svg style="left:54px;top:100px" width="15" height="12" viewBox="0 0 15 12" shape-rendering="crispEdges"><rect x="3" y="0" width="5" height="1" fill="#7e7e7e"/><rect x="2" y="1" width="1" height="1" fill="#7e7e7e"/><rect x="3" y="1" width="5" height="1" fill="#fff"/><rect x="8" y="1" width="1" height="1" fill="#7e7e7e"/><rect x="1" y="2" width="1" height="1" fill="#7e7e7e"/><rect x="2" y="2" width="2" height="1" fill="#fff"/><rect x="4" y="2" width="1" height="1" fill="#ffff70"/><rect x="5" y="2" width="1" height="1" fill="#fff"/><rect x="6" y="2" width="1" height="1" fill="#ffff70"/><rect x="7" y="2" width="2" height="1" fill="#fff"/><rect x="9" y="2" width="6" height="1" fill="#7e7e7e"/><rect x="1" y="3" width="1" height="1" fill="#7e7e7e"/><rect x="2" y="3" width="1" height="1" fill="#fff"/><rect x="3" y="3" width="1" height="1" fill="#ffff70"/><rect x="4" y="3" width="1" height="1" fill="#fff"/><rect x="5" y="3" width="1" height="1" fill="#ffff70"/><rect x="6" y="3" width="1" height="1" fill="#fff"/><rect x="7" y="3" width="1" height="1" fill="#ffff70"/><rect x="8" y="3" width="1" height="1" fill="#fff"/><rect x="9" y="3" width="1" height="1" fill="#ffff70"/><rect x="10" y="3" width="4" height="1" fill="#fff"/><rect x="14" y="3" width="1" height="1" fill="#7e7e7e"/><rect x="1" y="4" width="1" height="1" fill="#7e7e7e"/><rect x="2" y="4" width="2" height="1" fill="#fff"/><rect x="4" y="4" width="1" height="1" fill="#ffff70"/><rect x="5" y="4" width="1" height="1" fill="#fff"/><rect x="6" y="4" width="1" height="1" fill="#ffff70"/><rect x="7" y="4" width="1" height="1" fill="#fff"/><rect x="8" y="4" width="1" height="1" fill="#ffff70"/><rect x="9" y="4" width="1" height="1" fill="#fff"/><rect x="10" y="4" width="1" height="1" fill="#ffff70"/><rect x="11" y="4" width="1" height="1" fill="#fff"/><rect x="12" y="4" width="1" height="1" fill="#ffff70"/><rect x="13" y="4" width="1" height="1" fill="#fff"/><rect x="14" y="4" width="1" height="1" fill="#7e7e7e"/><rect x="0" y="5" width="12" height="1" fill="#7e7e7e"/><rect x="12" y="5" width="1" height="1" fill="#000"/><rect x="13" y="5" width="1" height="1" fill="#ffff70"/><rect x="14" y="5" width="1" height="1" fill="#7e7e7e"/><rect x="0" y="6" width="1" height="1" fill="#7e7e7e"/><rect x="1" y="6" width="11" height="1" fill="#fff"/><rect x="12" y="6" width="2" height="1" fill="#000"/><rect x="14" y="6" width="1" height="1" fill="#7e7e7e"/><rect x="1" y="7" width="1" height="1" fill="#7e7e7e"/><rect x="2" y="7" width="1" height="1" fill="#fff"/><rect x="3" y="7" width="1" height="1" fill="#ffff70"/><rect x="4" y="7" width="1" height="1" fill="#ffff00"/><rect x="5" y="7" width="1" height="1" fill="#ffff70"/><rect x="6" y="7" width="1" height="1" fill="#ffff00"/><rect x="7" y="7" width="1" height="1" fill="#ffff70"/><rect x="8" y="7" width="1" height="1" fill="#ffff00"/><rect x="9" y="7" width="1" height="1" fill="#ffff70"/><rect x="10" y="7" width="1" height="1" fill="#ffff00"/><rect x="11" y="7" width="1" height="1" fill="#ffff70"/><rect x="12" y="7" width="2" height="1" fill="#000"/><rect x="14" y="7" width="1" height="1" fill="#7e7e7e"/><rect x="1" y="8" width="1" height="1" fill="#7e7e7e"/><rect x="2" y="8" width="1" height="1" fill="#fff"/><rect x="3" y="8" width="1" height="1" fill="#ffff00"/><rect x="4" y="8" width="1" height="1" fill="#ffff70"/><rect x="5" y="8" width="1" height="1" fill="#ffff00"/><rect x="6" y="8" width="1" height="1" fill="#ffff70"/><rect x="7" y="8" width="1" height="1" fill="#ffff00"/><rect x="8" y="8" width="1" height="1" fill="#ffff70"/><rect x="9" y="8" width="1" height="1" fill="#ffff00"/><rect x="10" y="8" width="1" height="1" fill="#ffff70"/><rect x="11" y="8" width="1" height="1" fill="#ffff00"/><rect x="12" y="8" width="2" height="1" fill="#000"/><rect x="14" y="8" width="1" height="1" fill="#7e7e7e"/><rect x="1" y="9" width="1" height="1" fill="#7e7e7e"/><rect x="2" y="9" width="1" height="1" fill="#fff"/><rect x="3" y="9" width="1" height="1" fill="#ffff70"/><rect x="4" y="9" width="1" height="1" fill="#ffff00"/><rect x="5" y="9" width="1" height="1" fill="#ffff70"/><rect x="6" y="9" width="1" height="1" fill="#ffff00"/><rect x="7" y="9" width="1" height="1" fill="#ffff70"/><rect x="8" y="9" width="1" height="1" fill="#ffff00"/><rect x="9" y="9" width="1" height="1" fill="#ffff70"/><rect x="10" y="9" width="1" height="1" fill="#ffff00"/><rect x="11" y="9" width="1" height="1" fill="#ffff70"/><rect x="12" y="9" width="1" height="1" fill="#ffff00"/><rect x="13" y="9" width="1" height="1" fill="#000"/><rect x="14" y="9" width="1" height="1" fill="#7e7e7e"/><rect x="2" y="10" width="1" height="1" fill="#7e7e7e"/><rect x="3" y="10" width="1" height="1" fill="#fff"/><rect x="4" y="10" width="1" height="1" fill="#ffff00"/><rect x="5" y="10" width="1" height="1" fill="#ffff70"/><rect x="6" y="10" width="1" height="1" fill="#ffff00"/><rect x="7" y="10" width="1" height="1" fill="#ffff70"/><rect x="8" y="10" width="1" height="1" fill="#ffff00"/><rect x="9" y="10" width="1" height="1" fill="#ffff70"/><rect x="10" y="10" width="1" height="1" fill="#ffff00"/><rect x="11" y="10" width="1" height="1" fill="#ffff70"/><rect x="12" y="10" width="1" height="1" fill="#ffff00"/><rect x="13" y="10" width="1" height="1" fill="#7e7e7e"/><rect x="2" y="11" width="12" height="1" fill="#7e7e7e"/></svg>
<span style="left:73.8px;top:100.84px;font-size:12px;line-height:12px;color:#000;letter-spacing:-0.019px;">SimpleEditor</span>
<div style="left:63px;top:127px;width:9px;height:1px;background:repeating-linear-gradient(90deg,#8c8c8c 0 1px,transparent 1px 2px)"></div>
<svg style="left:54px;top:123px" width="9" height="9" viewBox="0 0 9 9" ><rect x="0.550" y="0.550" width="7.900" height="7.900" rx="1.500" fill="#fff" stroke="#8482d6" stroke-width="1.100"/><rect x="1.500" y="5.200" width="6" height="0.800" fill="#dcdcdc"/><rect x="1.300" y="6.300" width="6.400" height="1.200" fill="#ececec"/><rect x="2" y="4" width="5" height="1" fill="#000"/></svg>
<svg style="left:74px;top:119px" width="15" height="14" viewBox="0 0 15 14" shape-rendering="crispEdges"><rect x="0" y="0" width="8" height="1" fill="#8a8cf0"/><rect x="8" y="0" width="6" height="1" fill="#4a6ae0"/><rect x="14" y="0" width="1" height="1" fill="#2a44c8"/><rect x="0" y="1" width="1" height="1" fill="#8a8cf0"/><rect x="1" y="1" width="12" height="1" fill="#a8c4f4"/><rect x="13" y="1" width="1" height="1" fill="#4a6ae0"/><rect x="14" y="1" width="1" height="1" fill="#2a44c8"/><rect x="0" y="2" width="6" height="1" fill="#8a8cf0"/><rect x="6" y="2" width="7" height="1" fill="#4a6ae0"/><rect x="13" y="2" width="2" height="1" fill="#2a44c8"/><rect x="0" y="3" width="1" height="1" fill="#9aa0e0"/><rect x="1" y="3" width="13" height="1" fill="#ece9d8"/><rect x="14" y="3" width="1" height="1" fill="#1c1c6c"/><rect x="0" y="4" width="1" height="1" fill="#9aa0e0"/><rect x="1" y="4" width="5" height="1" fill="#ece9d8"/><rect x="6" y="4" width="6" height="1" fill="#4a7fd4"/><rect x="12" y="4" width="2" height="1" fill="#ece9d8"/><rect x="14" y="4" width="1" height="1" fill="#1c1c6c"/><rect x="0" y="5" width="1" height="1" fill="#9aa0e0"/><rect x="1" y="5" width="1" height="1" fill="#ece9d8"/><rect x="2" y="5" width="3" height="1" fill="#6a8aa8"/><rect x="5" y="5" width="1" height="1" fill="#ece9d8"/><rect x="6" y="5" width="1" height="1" fill="#4a7fd4"/><rect x="7" y="5" width="4" height="1" fill="#fff"/><rect x="11" y="5" width="1" height="1" fill="#4a7fd4"/><rect x="12" y="5" width="2" height="1" fill="#ece9d8"/><rect x="14" y="5" width="1" height="1" fill="#1c1c6c"/><rect x="0" y="6" width="1" height="1" fill="#9aa0e0"/><rect x="1" y="6" width="5" height="1" fill="#ece9d8"/><rect x="6" y="6" width="6" height="1" fill="#4a7fd4"/><rect x="12" y="6" width="2" height="1" fill="#ece9d8"/><rect x="14" y="6" width="1" height="1" fill="#1c1c6c"/><rect x="0" y="7" width="1" height="1" fill="#9aa0e0"/><rect x="1" y="7" width="13" height="1" fill="#ece9d8"/><rect x="14" y="7" width="1" height="1" fill="#1c1c6c"/><rect x="0" y="8" width="1" height="1" fill="#9aa0e0"/><rect x="1" y="8" width="5" height="1" fill="#ece9d8"/><rect x="6" y="8" width="6" height="1" fill="#4a7fd4"/><rect x="12" y="8" width="2" height="1" fill="#ece9d8"/><rect x="14" y="8" width="1" height="1" fill="#1c1c6c"/><rect x="0" y="9" width="1" height="1" fill="#9aa0e0"/><rect x="1" y="9" width="1" height="1" fill="#ece9d8"/><rect x="2" y="9" width="3" height="1" fill="#6a8aa8"/><rect x="5" y="9" width="1" height="1" fill="#ece9d8"/><rect x="6" y="9" width="1" height="1" fill="#4a7fd4"/><rect x="7" y="9" width="4" height="1" fill="#fff"/><rect x="11" y="9" width="1" height="1" fill="#4a7fd4"/><rect x="12" y="9" width="2" height="1" fill="#ece9d8"/><rect x="14" y="9" width="1" height="1" fill="#1c1c6c"/><rect x="0" y="10" width="1" height="1" fill="#9aa0e0"/><rect x="1" y="10" width="5" height="1" fill="#ece9d8"/><rect x="6" y="10" width="6" height="1" fill="#4a7fd4"/><rect x="12" y="10" width="2" height="1" fill="#ece9d8"/><rect x="14" y="10" width="1" height="1" fill="#1c1c6c"/><rect x="0" y="11" width="1" height="1" fill="#9aa0e0"/><rect x="1" y="11" width="13" height="1" fill="#ece9d8"/><rect x="14" y="11" width="1" height="1" fill="#1c1c6c"/><rect x="0" y="12" width="1" height="1" fill="#9aa0e0"/><rect x="1" y="12" width="13" height="1" fill="#ece9d8"/><rect x="14" y="12" width="1" height="1" fill="#1c1c6c"/><rect x="0" y="13" width="15" height="1" fill="#1c1c6c"/></svg>
<span style="left:93.8px;top:120.84px;font-size:12px;line-height:12px;color:#000;letter-spacing:0.262px;">frmAbout.cs</span>
<div style="left:83px;top:147px;width:9px;height:1px;background:repeating-linear-gradient(90deg,#8c8c8c 0 1px,transparent 1px 2px)"></div>
<svg style="left:74px;top:143px" width="9" height="9" viewBox="0 0 9 9" ><rect x="0.550" y="0.550" width="7.900" height="7.900" rx="1.500" fill="#fff" stroke="#8482d6" stroke-width="1.100"/><rect x="1.500" y="5.200" width="6" height="0.800" fill="#dcdcdc"/><rect x="1.300" y="6.300" width="6.400" height="1.200" fill="#ececec"/><rect x="2" y="4" width="5" height="1" fill="#000"/></svg>
<svg style="left:94px;top:139px" width="15" height="14" viewBox="0 0 15 14" shape-rendering="crispEdges"><rect x="0" y="0" width="8" height="1" fill="#8a8cf0"/><rect x="8" y="0" width="6" height="1" fill="#4a6ae0"/><rect x="14" y="0" width="1" height="1" fill="#2a44c8"/><rect x="0" y="1" width="1" height="1" fill="#8a8cf0"/><rect x="1" y="1" width="12" height="1" fill="#a8c4f4"/><rect x="13" y="1" width="1" height="1" fill="#4a6ae0"/><rect x="14" y="1" width="1" height="1" fill="#2a44c8"/><rect x="0" y="2" width="6" height="1" fill="#8a8cf0"/><rect x="6" y="2" width="7" height="1" fill="#4a6ae0"/><rect x="13" y="2" width="2" height="1" fill="#2a44c8"/><rect x="0" y="3" width="1" height="1" fill="#9aa0e0"/><rect x="1" y="3" width="13" height="1" fill="#ece9d8"/><rect x="14" y="3" width="1" height="1" fill="#1c1c6c"/><rect x="0" y="4" width="1" height="1" fill="#9aa0e0"/><rect x="1" y="4" width="5" height="1" fill="#ece9d8"/><rect x="6" y="4" width="6" height="1" fill="#4a7fd4"/><rect x="12" y="4" width="2" height="1" fill="#ece9d8"/><rect x="14" y="4" width="1" height="1" fill="#1c1c6c"/><rect x="0" y="5" width="1" height="1" fill="#9aa0e0"/><rect x="1" y="5" width="1" height="1" fill="#ece9d8"/><rect x="2" y="5" width="3" height="1" fill="#6a8aa8"/><rect x="5" y="5" width="1" height="1" fill="#ece9d8"/><rect x="6" y="5" width="1" height="1" fill="#4a7fd4"/><rect x="7" y="5" width="4" height="1" fill="#fff"/><rect x="11" y="5" width="1" height="1" fill="#4a7fd4"/><rect x="12" y="5" width="2" height="1" fill="#ece9d8"/><rect x="14" y="5" width="1" height="1" fill="#1c1c6c"/><rect x="0" y="6" width="1" height="1" fill="#9aa0e0"/><rect x="1" y="6" width="5" height="1" fill="#ece9d8"/><rect x="6" y="6" width="6" height="1" fill="#4a7fd4"/><rect x="12" y="6" width="2" height="1" fill="#ece9d8"/><rect x="14" y="6" width="1" height="1" fill="#1c1c6c"/><rect x="0" y="7" width="1" height="1" fill="#9aa0e0"/><rect x="1" y="7" width="13" height="1" fill="#ece9d8"/><rect x="14" y="7" width="1" height="1" fill="#1c1c6c"/><rect x="0" y="8" width="1" height="1" fill="#9aa0e0"/><rect x="1" y="8" width="5" height="1" fill="#ece9d8"/><rect x="6" y="8" width="6" height="1" fill="#4a7fd4"/><rect x="12" y="8" width="2" height="1" fill="#ece9d8"/><rect x="14" y="8" width="1" height="1" fill="#1c1c6c"/><rect x="0" y="9" width="1" height="1" fill="#9aa0e0"/><rect x="1" y="9" width="1" height="1" fill="#ece9d8"/><rect x="2" y="9" width="3" height="1" fill="#6a8aa8"/><rect x="5" y="9" width="1" height="1" fill="#ece9d8"/><rect x="6" y="9" width="1" height="1" fill="#4a7fd4"/><rect x="7" y="9" width="4" height="1" fill="#fff"/><rect x="11" y="9" width="1" height="1" fill="#4a7fd4"/><rect x="12" y="9" width="2" height="1" fill="#ece9d8"/><rect x="14" y="9" width="1" height="1" fill="#1c1c6c"/><rect x="0" y="10" width="1" height="1" fill="#9aa0e0"/><rect x="1" y="10" width="5" height="1" fill="#ece9d8"/><rect x="6" y="10" width="6" height="1" fill="#4a7fd4"/><rect x="12" y="10" width="2" height="1" fill="#ece9d8"/><rect x="14" y="10" width="1" height="1" fill="#1c1c6c"/><rect x="0" y="11" width="1" height="1" fill="#9aa0e0"/><rect x="1" y="11" width="13" height="1" fill="#ece9d8"/><rect x="14" y="11" width="1" height="1" fill="#1c1c6c"/><rect x="0" y="12" width="1" height="1" fill="#9aa0e0"/><rect x="1" y="12" width="13" height="1" fill="#ece9d8"/><rect x="14" y="12" width="1" height="1" fill="#1c1c6c"/><rect x="0" y="13" width="15" height="1" fill="#1c1c6c"/></svg>
<span style="left:115.0px;top:140.84px;font-size:12px;line-height:12px;color:#000;letter-spacing:0.489px;">frmAbout</span>
<div style="left:97px;top:157px;width:1px;height:11px;background:repeating-linear-gradient(180deg,#8c8c8c 0 1px,transparent 1px 2px)"></div>
<div style="left:97px;top:167px;width:15px;height:1px;background:repeating-linear-gradient(90deg,#8c8c8c 0 1px,transparent 1px 2px)"></div>
<svg style="left:114px;top:159px" width="14" height="14" viewBox="0 0 14 14" ><rect x="0.500" y="0.500" width="13" height="13" fill="#fff" stroke="#7a7a7a"/><path d="M2.600 7.400l2.400 3.500 6.600-8.400" stroke="#000" stroke-width="2" fill="none"/></svg>
<span style="left:134.8px;top:160.84px;font-size:12px;line-height:12px;color:#000;letter-spacing:-0.177px;">Text</span>
<span style="left:215px;top:160.84px;font-size:12px;line-height:12px;color:#000;">1</span>
<div style="left:83px;top:187px;width:9px;height:1px;background:repeating-linear-gradient(90deg,#8c8c8c 0 1px,transparent 1px 2px)"></div>
<svg style="left:74px;top:183px" width="9" height="9" viewBox="0 0 9 9" ><rect x="0.550" y="0.550" width="7.900" height="7.900" rx="1.500" fill="#fff" stroke="#8482d6" stroke-width="1.100"/><rect x="1.500" y="5.200" width="6" height="0.800" fill="#dcdcdc"/><rect x="1.300" y="6.300" width="6.400" height="1.200" fill="#ececec"/><rect x="2" y="4" width="5" height="1" fill="#000"/></svg>
<svg style="left:94px;top:179px" width="16" height="14" viewBox="0 0 16 14" ><defs><linearGradient id="abg" x1="0" y1="0" x2="0" y2="1"><stop offset="0.550" stop-color="#fff"/><stop offset="1" stop-color="#ebe6da"/></linearGradient></defs><rect x="0.600" y="0.600" width="14.800" height="12.800" rx="3.300" fill="url(#abg)" stroke="#15498c" stroke-width="1.150"/></svg>
<span style="left:96.9px;top:181.91px;font-size:9.2px;line-height:9.2px;color:#000;">ab</span>
<span style="left:115.0px;top:180.84px;font-size:12px;line-height:12px;color:#000;letter-spacing:-0.011px;">btOK</span>
<div style="left:97px;top:197px;width:1px;height:11px;background:repeating-linear-gradient(180deg,#8c8c8c 0 1px,transparent 1px 2px)"></div>
<div style="left:97px;top:207px;width:15px;height:1px;background:repeating-linear-gradient(90deg,#8c8c8c 0 1px,transparent 1px 2px)"></div>
<svg style="left:114px;top:199px" width="14" height="14" viewBox="0 0 14 14" ><rect x="0.500" y="0.500" width="13" height="13" fill="#fff" stroke="#7a7a7a"/><path d="M2.600 7.400l2.400 3.500 6.600-8.400" stroke="#000" stroke-width="2" fill="none"/></svg>
<span style="left:134.8px;top:200.84px;font-size:12px;line-height:12px;color:#000;letter-spacing:-0.177px;">Text</span>
<span style="left:215px;top:200.84px;font-size:12px;line-height:12px;color:#000;">4</span>
<div style="left:83px;top:227px;width:9px;height:1px;background:repeating-linear-gradient(90deg,#8c8c8c 0 1px,transparent 1px 2px)"></div>
<svg style="left:74px;top:223px" width="9" height="9" viewBox="0 0 9 9" ><rect x="0.550" y="0.550" width="7.900" height="7.900" rx="1.500" fill="#fff" stroke="#8482d6" stroke-width="1.100"/><rect x="1.500" y="5.200" width="6" height="0.800" fill="#dcdcdc"/><rect x="1.300" y="6.300" width="6.400" height="1.200" fill="#ececec"/><rect x="2" y="4" width="5" height="1" fill="#000"/></svg>
<span style="left:96.3px;top:218px;font-family:'Liberation Serif',serif;font-weight:bold;font-size:16.500px;line-height:16.500px;color:#111">A</span>
<span style="left:115.0px;top:220.84px;font-size:12px;line-height:12px;color:#000;letter-spacing:-0.506px;">Label1</span>
<div style="left:97px;top:237px;width:1px;height:11px;background:repeating-linear-gradient(180deg,#8c8c8c 0 1px,transparent 1px 2px)"></div>
<div style="left:97px;top:247px;width:15px;height:1px;background:repeating-linear-gradient(90deg,#8c8c8c 0 1px,transparent 1px 2px)"></div>
<svg style="left:114px;top:239px" width="14" height="14" viewBox="0 0 14 14" ><rect x="0.500" y="0.500" width="13" height="13" fill="#fff" stroke="#7a7a7a"/><path d="M2.600 7.400l2.400 3.500 6.600-8.400" stroke="#000" stroke-width="2" fill="none"/></svg>
<span style="left:134.8px;top:240.84px;font-size:12px;line-height:12px;color:#000;letter-spacing:-0.177px;">Text</span>
<span style="left:215px;top:240.84px;font-size:12px;line-height:12px;color:#000;">3</span>
<div style="left:83px;top:267px;width:9px;height:1px;background:repeating-linear-gradient(90deg,#8c8c8c 0 1px,transparent 1px 2px)"></div>
<svg style="left:74px;top:263px" width="9" height="9" viewBox="0 0 9 9" ><rect x="0.550" y="0.550" width="7.900" height="7.900" rx="1.500" fill="#fff" stroke="#8482d6" stroke-width="1.100"/><rect x="1.500" y="5.200" width="6" height="0.800" fill="#dcdcdc"/><rect x="1.300" y="6.300" width="6.400" height="1.200" fill="#ececec"/><rect x="2" y="4" width="5" height="1" fill="#000"/></svg>
<span style="left:96.3px;top:258px;font-family:'Liberation Serif',serif;font-weight:bold;font-size:16.500px;line-height:16.500px;color:#111">A</span>
<span style="left:115.0px;top:260.84px;font-size:12px;line-height:12px;color:#000;letter-spacing:-0.306px;">Label2</span>
<div style="left:97px;top:277px;width:1px;height:30px;background:repeating-linear-gradient(180deg,#8c8c8c 0 1px,transparent 1px 2px)"></div>
<div style="left:97px;top:306px;width:15px;height:1px;background:repeating-linear-gradient(90deg,#8c8c8c 0 1px,transparent 1px 2px)"></div>
<svg style="left:114px;top:298px" width="14" height="14" viewBox="0 0 14 14" ><rect x="0.500" y="0.500" width="13" height="13" fill="#fff" stroke="#7a7a7a"/><path d="M2.600 7.400l2.400 3.500 6.600-8.400" stroke="#000" stroke-width="2" fill="none"/></svg>
<span style="left:134.8px;top:300.84px;font-size:12px;line-height:12px;color:#000;letter-spacing:-0.177px;">Text</span>
<span style="left:215px;top:300.84px;font-size:12px;line-height:12px;color:#000;">2</span>
<div style="left:83px;top:346px;width:9px;height:1px;background:repeating-linear-gradient(90deg,#8c8c8c 0 1px,transparent 1px 2px)"></div>
<svg style="left:74px;top:342px" width="9" height="9" viewBox="0 0 9 9" ><rect x="0.550" y="0.550" width="7.900" height="7.900" rx="1.500" fill="#fff" stroke="#8482d6" stroke-width="1.100"/><rect x="1.500" y="5.200" width="6" height="0.800" fill="#dcdcdc"/><rect x="1.300" y="6.300" width="6.400" height="1.200" fill="#ececec"/><rect x="2" y="4" width="5" height="1" fill="#000"/></svg>
<span style="left:96.3px;top:337px;font-family:'Liberation Serif',serif;font-weight:bold;font-size:16.500px;line-height:16.500px;color:#111">A</span>
<span style="left:115.0px;top:339.84px;font-size:12px;line-height:12px;color:#000;letter-spacing:0.017px;">lblVersion</span>
<div style="left:97px;top:357px;width:1px;height:10px;background:repeating-linear-gradient(180deg,#8c8c8c 0 1px,transparent 1px 2px)"></div>
<div style="left:97px;top:366px;width:15px;height:1px;background:repeating-linear-gradient(90deg,#8c8c8c 0 1px,transparent 1px 2px)"></div>
<svg style="left:114px;top:358px" width="14" height="14" viewBox="0 0 14 14" ><rect x="0.500" y="0.500" width="13" height="13" fill="#fff" stroke="#7a7a7a"/><path d="M2.600 7.400l2.400 3.500 6.600-8.400" stroke="#000" stroke-width="2" fill="none"/></svg>
<span style="left:134.8px;top:359.84px;font-size:12px;line-height:12px;color:#000;letter-spacing:-0.177px;">Text</span>
<span style="left:215px;top:359.84px;font-size:12px;line-height:12px;color:#000;">5</span>
<div style="left:63px;top:386px;width:9px;height:1px;background:repeating-linear-gradient(90deg,#8c8c8c 0 1px,transparent 1px 2px)"></div>
<svg style="left:54px;top:382px" width="9" height="9" viewBox="0 0 9 9" ><rect x="0.550" y="0.550" width="7.900" height="7.900" rx="1.500" fill="#fff" stroke="#8482d6" stroke-width="1.100"/><rect x="1.500" y="5.200" width="6" height="0.800" fill="#dcdcdc"/><rect x="1.300" y="6.300" width="6.400" height="1.200" fill="#ececec"/><rect x="2" y="4" width="5" height="1" fill="#000"/></svg>
<svg style="left:74px;top:378px" width="15" height="14" viewBox="0 0 15 14" shape-rendering="crispEdges"><rect x="0" y="0" width="8" height="1" fill="#8a8cf0"/><rect x="8" y="0" width="6" height="1" fill="#4a6ae0"/><rect x="14" y="0" width="1" height="1" fill="#2a44c8"/><rect x="0" y="1" width="1" height="1" fill="#8a8cf0"/><rect x="1" y="1" width="12" height="1" fill="#a8c4f4"/><rect x="13" y="1" width="1" height="1" fill="#4a6ae0"/><rect x="14" y="1" width="1" height="1" fill="#2a44c8"/><rect x="0" y="2" width="6" height="1" fill="#8a8cf0"/><rect x="6" y="2" width="7" height="1" fill="#4a6ae0"/><rect x="13" y="2" width="2" height="1" fill="#2a44c8"/><rect x="0" y="3" width="1" height="1" fill="#9aa0e0"/><rect x="1" y="3" width="13" height="1" fill="#ece9d8"/><rect x="14" y="3" width="1" height="1" fill="#1c1c6c"/><rect x="0" y="4" width="1" height="1" fill="#9aa0e0"/><rect x="1" y="4" width="5" height="1" fill="#ece9d8"/><rect x="6" y="4" width="6" height="1" fill="#4a7fd4"/><rect x="12" y="4" width="2" height="1" fill="#ece9d8"/><rect x="14" y="4" width="1" height="1" fill="#1c1c6c"/><rect x="0" y="5" width="1" height="1" fill="#9aa0e0"/><rect x="1" y="5" width="1" height="1" fill="#ece9d8"/><rect x="2" y="5" width="3" height="1" fill="#6a8aa8"/><rect x="5" y="5" width="1" height="1" fill="#ece9d8"/><rect x="6" y="5" width="1" height="1" fill="#4a7fd4"/><rect x="7" y="5" width="4" height="1" fill="#fff"/><rect x="11" y="5" width="1" height="1" fill="#4a7fd4"/><rect x="12" y="5" width="2" height="1" fill="#ece9d8"/><rect x="14" y="5" width="1" height="1" fill="#1c1c6c"/><rect x="0" y="6" width="1" height="1" fill="#9aa0e0"/><rect x="1" y="6" width="5" height="1" fill="#ece9d8"/><rect x="6" y="6" width="6" height="1" fill="#4a7fd4"/><rect x="12" y="6" width="2" height="1" fill="#ece9d8"/><rect x="14" y="6" width="1" height="1" fill="#1c1c6c"/><rect x="0" y="7" width="1" height="1" fill="#9aa0e0"/><rect x="1" y="7" width="13" height="1" fill="#ece9d8"/><rect x="14" y="7" width="1" height="1" fill="#1c1c6c"/><rect x="0" y="8" width="1" height="1" fill="#9aa0e0"/><rect x="1" y="8" width="5" height="1" fill="#ece9d8"/><rect x="6" y="8" width="6" height="1" fill="#4a7fd4"/><rect x="12" y="8" width="2" height="1" fill="#ece9d8"/><rect x="14" y="8" width="1" height="1" fill="#1c1c6c"/><rect x="0" y="9" width="1" height="1" fill="#9aa0e0"/><rect x="1" y="9" width="1" height="1" fill="#ece9d8"/><rect x="2" y="9" width="3" height="1" fill="#6a8aa8"/><rect x="5" y="9" width="1" height="1" fill="#ece9d8"/><rect x="6" y="9" width="1" height="1" fill="#4a7fd4"/><rect x="7" y="9" width="4" height="1" fill="#fff"/><rect x="11" y="9" width="1" height="1" fill="#4a7fd4"/><rect x="12" y="9" width="2" height="1" fill="#ece9d8"/><rect x="14" y="9" width="1" height="1" fill="#1c1c6c"/><rect x="0" y="10" width="1" height="1" fill="#9aa0e0"/><rect x="1" y="10" width="5" height="1" fill="#ece9d8"/><rect x="6" y="10" width="6" height="1" fill="#4a7fd4"/><rect x="12" y="10" width="2" height="1" fill="#ece9d8"/><rect x="14" y="10" width="1" height="1" fill="#1c1c6c"/><rect x="0" y="11" width="1" height="1" fill="#9aa0e0"/><rect x="1" y="11" width="13" height="1" fill="#ece9d8"/><rect x="14" y="11" width="1" height="1" fill="#1c1c6c"/><rect x="0" y="12" width="1" height="1" fill="#9aa0e0"/><rect x="1" y="12" width="13" height="1" fill="#ece9d8"/><rect x="14" y="12" width="1" height="1" fill="#1c1c6c"/><rect x="0" y="13" width="15" height="1" fill="#1c1c6c"/></svg>
<span style="left:93.8px;top:379.84px;font-size:12px;line-height:12px;color:#000;letter-spacing:0.303px;">frmMain.cs</span>
<div style="left:83px;top:406px;width:9px;height:1px;background:repeating-linear-gradient(90deg,#8c8c8c 0 1px,transparent 1px 2px)"></div>
<svg style="left:74px;top:402px" width="9" height="9" viewBox="0 0 9 9" ><rect x="0.550" y="0.550" width="7.900" height="7.900" rx="1.500" fill="#fff" stroke="#8482d6" stroke-width="1.100"/><rect x="1.500" y="5.200" width="6" height="0.800" fill="#dcdcdc"/><rect x="1.300" y="6.300" width="6.400" height="1.200" fill="#ececec"/><rect x="2" y="4" width="5" height="1" fill="#000"/></svg>
<svg style="left:94px;top:398px" width="15" height="14" viewBox="0 0 15 14" shape-rendering="crispEdges"><rect x="0" y="0" width="8" height="1" fill="#8a8cf0"/><rect x="8" y="0" width="6" height="1" fill="#4a6ae0"/><rect x="14" y="0" width="1" height="1" fill="#2a44c8"/><rect x="0" y="1" width="1" height="1" fill="#8a8cf0"/><rect x="1" y="1" width="12" height="1" fill="#a8c4f4"/><rect x="13" y="1" width="1" height="1" fill="#4a6ae0"/><rect x="14" y="1" width="1" height="1" fill="#2a44c8"/><rect x="0" y="2" width="6" height="1" fill="#8a8cf0"/><rect x="6" y="2" width="7" height="1" fill="#4a6ae0"/><rect x="13" y="2" width="2" height="1" fill="#2a44c8"/><rect x="0" y="3" width="1" height="1" fill="#9aa0e0"/><rect x="1" y="3" width="13" height="1" fill="#ece9d8"/><rect x="14" y="3" width="1" height="1" fill="#1c1c6c"/><rect x="0" y="4" width="1" height="1" fill="#9aa0e0"/><rect x="1" y="4" width="5" height="1" fill="#ece9d8"/><rect x="6" y="4" width="6" height="1" fill="#4a7fd4"/><rect x="12" y="4" width="2" height="1" fill="#ece9d8"/><rect x="14" y="4" width="1" height="1" fill="#1c1c6c"/><rect x="0" y="5" width="1" height="1" fill="#9aa0e0"/><rect x="1" y="5" width="1" height="1" fill="#ece9d8"/><rect x="2" y="5" width="3" height="1" fill="#6a8aa8"/><rect x="5" y="5" width="1" height="1" fill="#ece9d8"/><rect x="6" y="5" width="1" height="1" fill="#4a7fd4"/><rect x="7" y="5" width="4" height="1" fill="#fff"/><rect x="11" y="5" width="1" height="1" fill="#4a7fd4"/><rect x="12" y="5" width="2" height="1" fill="#ece9d8"/><rect x="14" y="5" width="1" height="1" fill="#1c1c6c"/><rect x="0" y="6" width="1" height="1" fill="#9aa0e0"/><rect x="1" y="6" width="5" height="1" fill="#ece9d8"/><rect x="6" y="6" width="6" height="1" fill="#4a7fd4"/><rect x="12" y="6" width="2" height="1" fill="#ece9d8"/><rect x="14" y="6" width="1" height="1" fill="#1c1c6c"/><rect x="0" y="7" width="1" height="1" fill="#9aa0e0"/><rect x="1" y="7" width="13" height="1" fill="#ece9d8"/><rect x="14" y="7" width="1" height="1" fill="#1c1c6c"/><rect x="0" y="8" width="1" height="1" fill="#9aa0e0"/><rect x="1" y="8" width="5" height="1" fill="#ece9d8"/><rect x="6" y="8" width="6" height="1" fill="#4a7fd4"/><rect x="12" y="8" width="2" height="1" fill="#ece9d8"/><rect x="14" y="8" width="1" height="1" fill="#1c1c6c"/><rect x="0" y="9" width="1" height="1" fill="#9aa0e0"/><rect x="1" y="9" width="1" height="1" fill="#ece9d8"/><rect x="2" y="9" width="3" height="1" fill="#6a8aa8"/><rect x="5" y="9" width="1" height="1" fill="#ece9d8"/><rect x="6" y="9" width="1" height="1" fill="#4a7fd4"/><rect x="7" y="9" width="4" height="1" fill="#fff"/><rect x="11" y="9" width="1" height="1" fill="#4a7fd4"/><rect x="12" y="9" width="2" height="1" fill="#ece9d8"/><rect x="14" y="9" width="1" height="1" fill="#1c1c6c"/><rect x="0" y="10" width="1" height="1" fill="#9aa0e0"/><rect x="1" y="10" width="5" height="1" fill="#ece9d8"/><rect x="6" y="10" width="6" height="1" fill="#4a7fd4"/><rect x="12" y="10" width="2" height="1" fill="#ece9d8"/><rect x="14" y="10" width="1" height="1" fill="#1c1c6c"/><rect x="0" y="11" width="1" height="1" fill="#9aa0e0"/><rect x="1" y="11" width="13" height="1" fill="#ece9d8"/><rect x="14" y="11" width="1" height="1" fill="#1c1c6c"/><rect x="0" y="12" width="1" height="1" fill="#9aa0e0"/><rect x="1" y="12" width="13" height="1" fill="#ece9d8"/><rect x="14" y="12" width="1" height="1" fill="#1c1c6c"/><rect x="0" y="13" width="15" height="1" fill="#1c1c6c"/></svg>
<span style="left:115.0px;top:399.84px;font-size:12px;line-height:12px;color:#000;letter-spacing:0.438px;">frmMain</span>
<div style="left:97px;top:417px;width:1px;height:10px;background:repeating-linear-gradient(180deg,#8c8c8c 0 1px,transparent 1px 2px)"></div>
<div style="left:97px;top:426px;width:15px;height:1px;background:repeating-linear-gradient(90deg,#8c8c8c 0 1px,transparent 1px 2px)"></div>
<svg style="left:114px;top:418px" width="14" height="14" viewBox="0 0 14 14" ><rect x="0.500" y="0.500" width="13" height="13" fill="#fff" stroke="#7a7a7a"/><path d="M2.600 7.400l2.400 3.500 6.600-8.400" stroke="#000" stroke-width="2" fill="none"/></svg>
<span style="left:134.8px;top:419.84px;font-size:12px;line-height:12px;color:#000;letter-spacing:-0.177px;">Text</span>
<span style="left:215px;top:419.84px;font-size:12px;line-height:12px;color:#000;">3</span>
<div style="left:83px;top:446px;width:9px;height:1px;background:repeating-linear-gradient(90deg,#8c8c8c 0 1px,transparent 1px 2px)"></div>
<svg style="left:74px;top:442px" width="9" height="9" viewBox="0 0 9 9" ><rect x="0.550" y="0.550" width="7.900" height="7.900" rx="1.500" fill="#fff" stroke="#8482d6" stroke-width="1.100"/><rect x="1.500" y="5.200" width="6" height="0.800" fill="#dcdcdc"/><rect x="1.300" y="6.300" width="6.400" height="1.200" fill="#ececec"/><rect x="2" y="4" width="5" height="1" fill="#000"/></svg>
<svg style="left:96px;top:437px" width="13" height="15" viewBox="0 0 13 15" shape-rendering="crispEdges"><rect x="0" y="0" width="9" height="1" fill="#9a978a"/><rect x="0" y="1" width="1" height="1" fill="#9a978a"/><rect x="1" y="1" width="7" height="1" fill="#f4f1e4"/><rect x="8" y="1" width="1" height="1" fill="#9a978a"/><rect x="0" y="2" width="1" height="1" fill="#9a978a"/><rect x="1" y="2" width="1" height="1" fill="#f4f1e4"/><rect x="2" y="2" width="5" height="1" fill="#000"/><rect x="7" y="2" width="1" height="1" fill="#f4f1e4"/><rect x="8" y="2" width="1" height="1" fill="#9a978a"/><rect x="0" y="3" width="1" height="1" fill="#9a978a"/><rect x="1" y="3" width="7" height="1" fill="#f4f1e4"/><rect x="8" y="3" width="1" height="1" fill="#9a978a"/><rect x="0" y="4" width="13" height="1" fill="#9a978a"/><rect x="0" y="5" width="1" height="1" fill="#9a978a"/><rect x="1" y="5" width="11" height="1" fill="#f4f1e4"/><rect x="12" y="5" width="1" height="1" fill="#9a978a"/><rect x="0" y="6" width="1" height="1" fill="#9a978a"/><rect x="1" y="6" width="11" height="1" fill="#f4f1e4"/><rect x="12" y="6" width="1" height="1" fill="#9a978a"/><rect x="0" y="7" width="1" height="1" fill="#9a978a"/><rect x="1" y="7" width="2" height="1" fill="#f4f1e4"/><rect x="3" y="7" width="7" height="1" fill="#000"/><rect x="10" y="7" width="2" height="1" fill="#f4f1e4"/><rect x="12" y="7" width="1" height="1" fill="#9a978a"/><rect x="0" y="8" width="1" height="1" fill="#9a978a"/><rect x="1" y="8" width="11" height="1" fill="#f4f1e4"/><rect x="12" y="8" width="1" height="1" fill="#9a978a"/><rect x="0" y="9" width="1" height="1" fill="#9a978a"/><rect x="1" y="9" width="11" height="1" fill="#3f5fe8"/><rect x="12" y="9" width="1" height="1" fill="#9a978a"/><rect x="0" y="10" width="1" height="1" fill="#9a978a"/><rect x="1" y="10" width="2" height="1" fill="#3f5fe8"/><rect x="3" y="10" width="7" height="1" fill="#fff"/><rect x="10" y="10" width="2" height="1" fill="#3f5fe8"/><rect x="12" y="10" width="1" height="1" fill="#9a978a"/><rect x="0" y="11" width="1" height="1" fill="#9a978a"/><rect x="1" y="11" width="11" height="1" fill="#3f5fe8"/><rect x="12" y="11" width="1" height="1" fill="#9a978a"/><rect x="0" y="12" width="1" height="1" fill="#9a978a"/><rect x="1" y="12" width="11" height="1" fill="#f4f1e4"/><rect x="12" y="12" width="1" height="1" fill="#9a978a"/><rect x="0" y="13" width="1" height="1" fill="#9a978a"/><rect x="1" y="13" width="2" height="1" fill="#f4f1e4"/><rect x="3" y="13" width="7" height="1" fill="#000"/><rect x="10" y="13" width="2" height="1" fill="#f4f1e4"/><rect x="12" y="13" width="1" height="1" fill="#9a978a"/><rect x="0" y="14" width="13" height="1" fill="#9a978a"/></svg>
<span style="left:115.0px;top:439.84px;font-size:12px;line-height:12px;color:#000;letter-spacing:0.152px;">MenuItem5</span>
<div style="left:97px;top:457px;width:1px;height:3px;background:repeating-linear-gradient(180deg,#8c8c8c 0 1px,transparent 1px 2px)"></div>
<div style="left:114px;top:458px;width:14px;height:2px;background:#fff;border:1px solid #7a7a7a;border-bottom:none;box-sizing:border-box;"></div>
<span style="left:260.9px;top:99.94px;font-size:10.7px;line-height:10.7px;color:#adadad;letter-spacing:0.863px;-webkit-text-stroke:0.120px #adadad;">(Original language)</span>
<span style="left:260.9px;top:159.94px;font-size:10.7px;line-height:10.7px;color:#000;letter-spacing:0.760px;-webkit-text-stroke:0.120px #000;">About Simple Editor</span>
<span style="left:440.9px;top:159.94px;font-size:10.7px;line-height:10.7px;color:#000;letter-spacing:0.795px;-webkit-text-stroke:0.120px #000;">Über den einfachen Editor</span>
<span style="left:260.9px;top:199.94px;font-size:10.7px;line-height:10.7px;color:#000;letter-spacing:0.121px;-webkit-text-stroke:0.120px #000;">OK</span>
<span style="left:440.9px;top:199.94px;font-size:10.7px;line-height:10.7px;color:#000;letter-spacing:0.121px;-webkit-text-stroke:0.120px #000;">OK</span>
<span style="left:260.9px;top:239.94px;font-size:10.7px;line-height:10.7px;color:#000;letter-spacing:0.852px;-webkit-text-stroke:0.120px #000;">Simple Editor</span>
<span style="left:440.9px;top:239.94px;font-size:10.7px;line-height:10.7px;color:#000;letter-spacing:0.723px;-webkit-text-stroke:0.120px #000;">Einfacher Editor</span>
<span style="left:260.9px;top:279.94px;font-size:10.7px;line-height:10.7px;color:#000;letter-spacing:0.868px;-webkit-text-stroke:0.120px #000;">This is a simple editor, based</span>
<span style="left:260.9px;top:293.94px;font-size:10.7px;line-height:10.7px;color:#000;letter-spacing:0.670px;-webkit-text-stroke:0.120px #000;">on a TextBox control. It is part</span>
<span style="left:260.9px;top:307.94px;font-size:10.7px;line-height:10.7px;color:#000;letter-spacing:0.830px;-webkit-text-stroke:0.120px #000;">of a tutorial for Multi-Language</span>
<span style="left:260.9px;top:321.94px;font-size:10.7px;line-height:10.7px;color:#000;letter-spacing:0.889px;-webkit-text-stroke:0.120px #000;">for Visual Studio.</span>
<span style="left:440.9px;top:279.94px;font-size:10.7px;line-height:10.7px;color:#000;letter-spacing:0.822px;-webkit-text-stroke:0.120px #000;">Dies ist ein einfacher Editor, der auf einem</span>
<span style="left:440.9px;top:293.94px;font-size:10.7px;line-height:10.7px;color:#000;letter-spacing:0.711px;-webkit-text-stroke:0.120px #000;">TextBox-Steuerelement basiert. Es ist</span>
<span style="left:440.9px;top:307.94px;font-size:10.7px;line-height:10.7px;color:#000;letter-spacing:0.946px;-webkit-text-stroke:0.120px #000;">Bestandteil eines Tutorials für</span>
<span style="left:440.9px;top:321.94px;font-size:10.7px;line-height:10.7px;color:#000;letter-spacing:0.781px;-webkit-text-stroke:0.120px #000;">Multi-Language für Visual Studio.</span>
<span style="left:260.9px;top:358.94px;font-size:10.7px;line-height:10.7px;color:#000;letter-spacing:0.844px;-webkit-text-stroke:0.120px #000;">Version</span>
<span style="left:440.9px;top:358.94px;font-size:10.7px;line-height:10.7px;color:#adadad;letter-spacing:0.844px;-webkit-text-stroke:0.120px #adadad;">Version</span>
<span style="left:260.9px;top:418.94px;font-size:10.7px;line-height:10.7px;color:#000;letter-spacing:0.852px;-webkit-text-stroke:0.120px #000;">Simple Editor</span>
<span style="left:440.9px;top:418.94px;font-size:10.7px;line-height:10.7px;color:#000;letter-spacing:0.723px;-webkit-text-stroke:0.120px #000;">Einfacher Editor</span>
<div style="left:3px;top:462px;width:767px;height:1px;background:#f6f6f6;"></div>
<div style="left:1px;top:463px;width:771px;height:26px;background:#f0f0f0;"></div>
<div style="left:62px;top:463px;width:710px;height:1px;background:#a0a0a0;"></div>
<div style="left:62px;top:464px;width:710px;height:1px;background:#626262;"></div>
<div style="left:62px;top:487px;width:710px;height:1px;background:#f7f7f7;"></div>
<div style="left:62px;top:488px;width:710px;height:1px;background:#fbfbfb;"></div>
<div style="left:1px;top:463px;width:1px;height:26px;background:#fff;"></div>
<div style="left:59px;top:463px;width:1px;height:24px;background:#fafafa;"></div>
<div style="left:60px;top:463px;width:1px;height:25px;background:#a0a0a0;"></div>
<div style="left:61px;top:463px;width:1px;height:26px;background:#5c5c5c;"></div>
<div style="left:2px;top:487px;width:59px;height:1px;background:#a0a0a0;"></div>
<div style="left:1px;top:488px;width:61px;height:1px;background:#646464;"></div>
<span style="left:9.1px;top:471.84px;font-size:12px;line-height:12px;color:#000;letter-spacing:0.152px;">Controls</span>
<div style="left:62px;top:465px;width:77px;height:22px;background:#f0f0f0;box-shadow:inset 1px 0 0 #fff, inset -1px -1px 0 #626262, inset -2px -2px 0 #a0a0a0;"></div>
<span style="left:66.0px;top:469.84px;font-size:12px;line-height:12px;color:#000;letter-spacing:-0.168px;">Source Code</span>
<div style="left:139px;top:465px;width:65px;height:22px;background:#f0f0f0;box-shadow:inset 1px 0 0 #fff, inset -1px -1px 0 #626262, inset -2px -2px 0 #a0a0a0;"></div>
<span style="left:144.9px;top:469.84px;font-size:12px;line-height:12px;color:#000;letter-spacing:-0.417px;">Resources</span>
<div style="left:204px;top:465px;width:1px;height:21px;background:#fbfbfb;"></div>
<div style="left:0px;top:0px;width:773px;height:1px;background:#2f2f33;"></div>
<div style="left:0px;top:0px;width:1px;height:490px;background:#2f2f33;"></div>
<div style="left:772px;top:0px;width:1px;height:490px;background:#3a3a3a;"></div>
<div style="left:0px;top:489px;width:773px;height:1px;background:#333;"></div>
</body></html>
